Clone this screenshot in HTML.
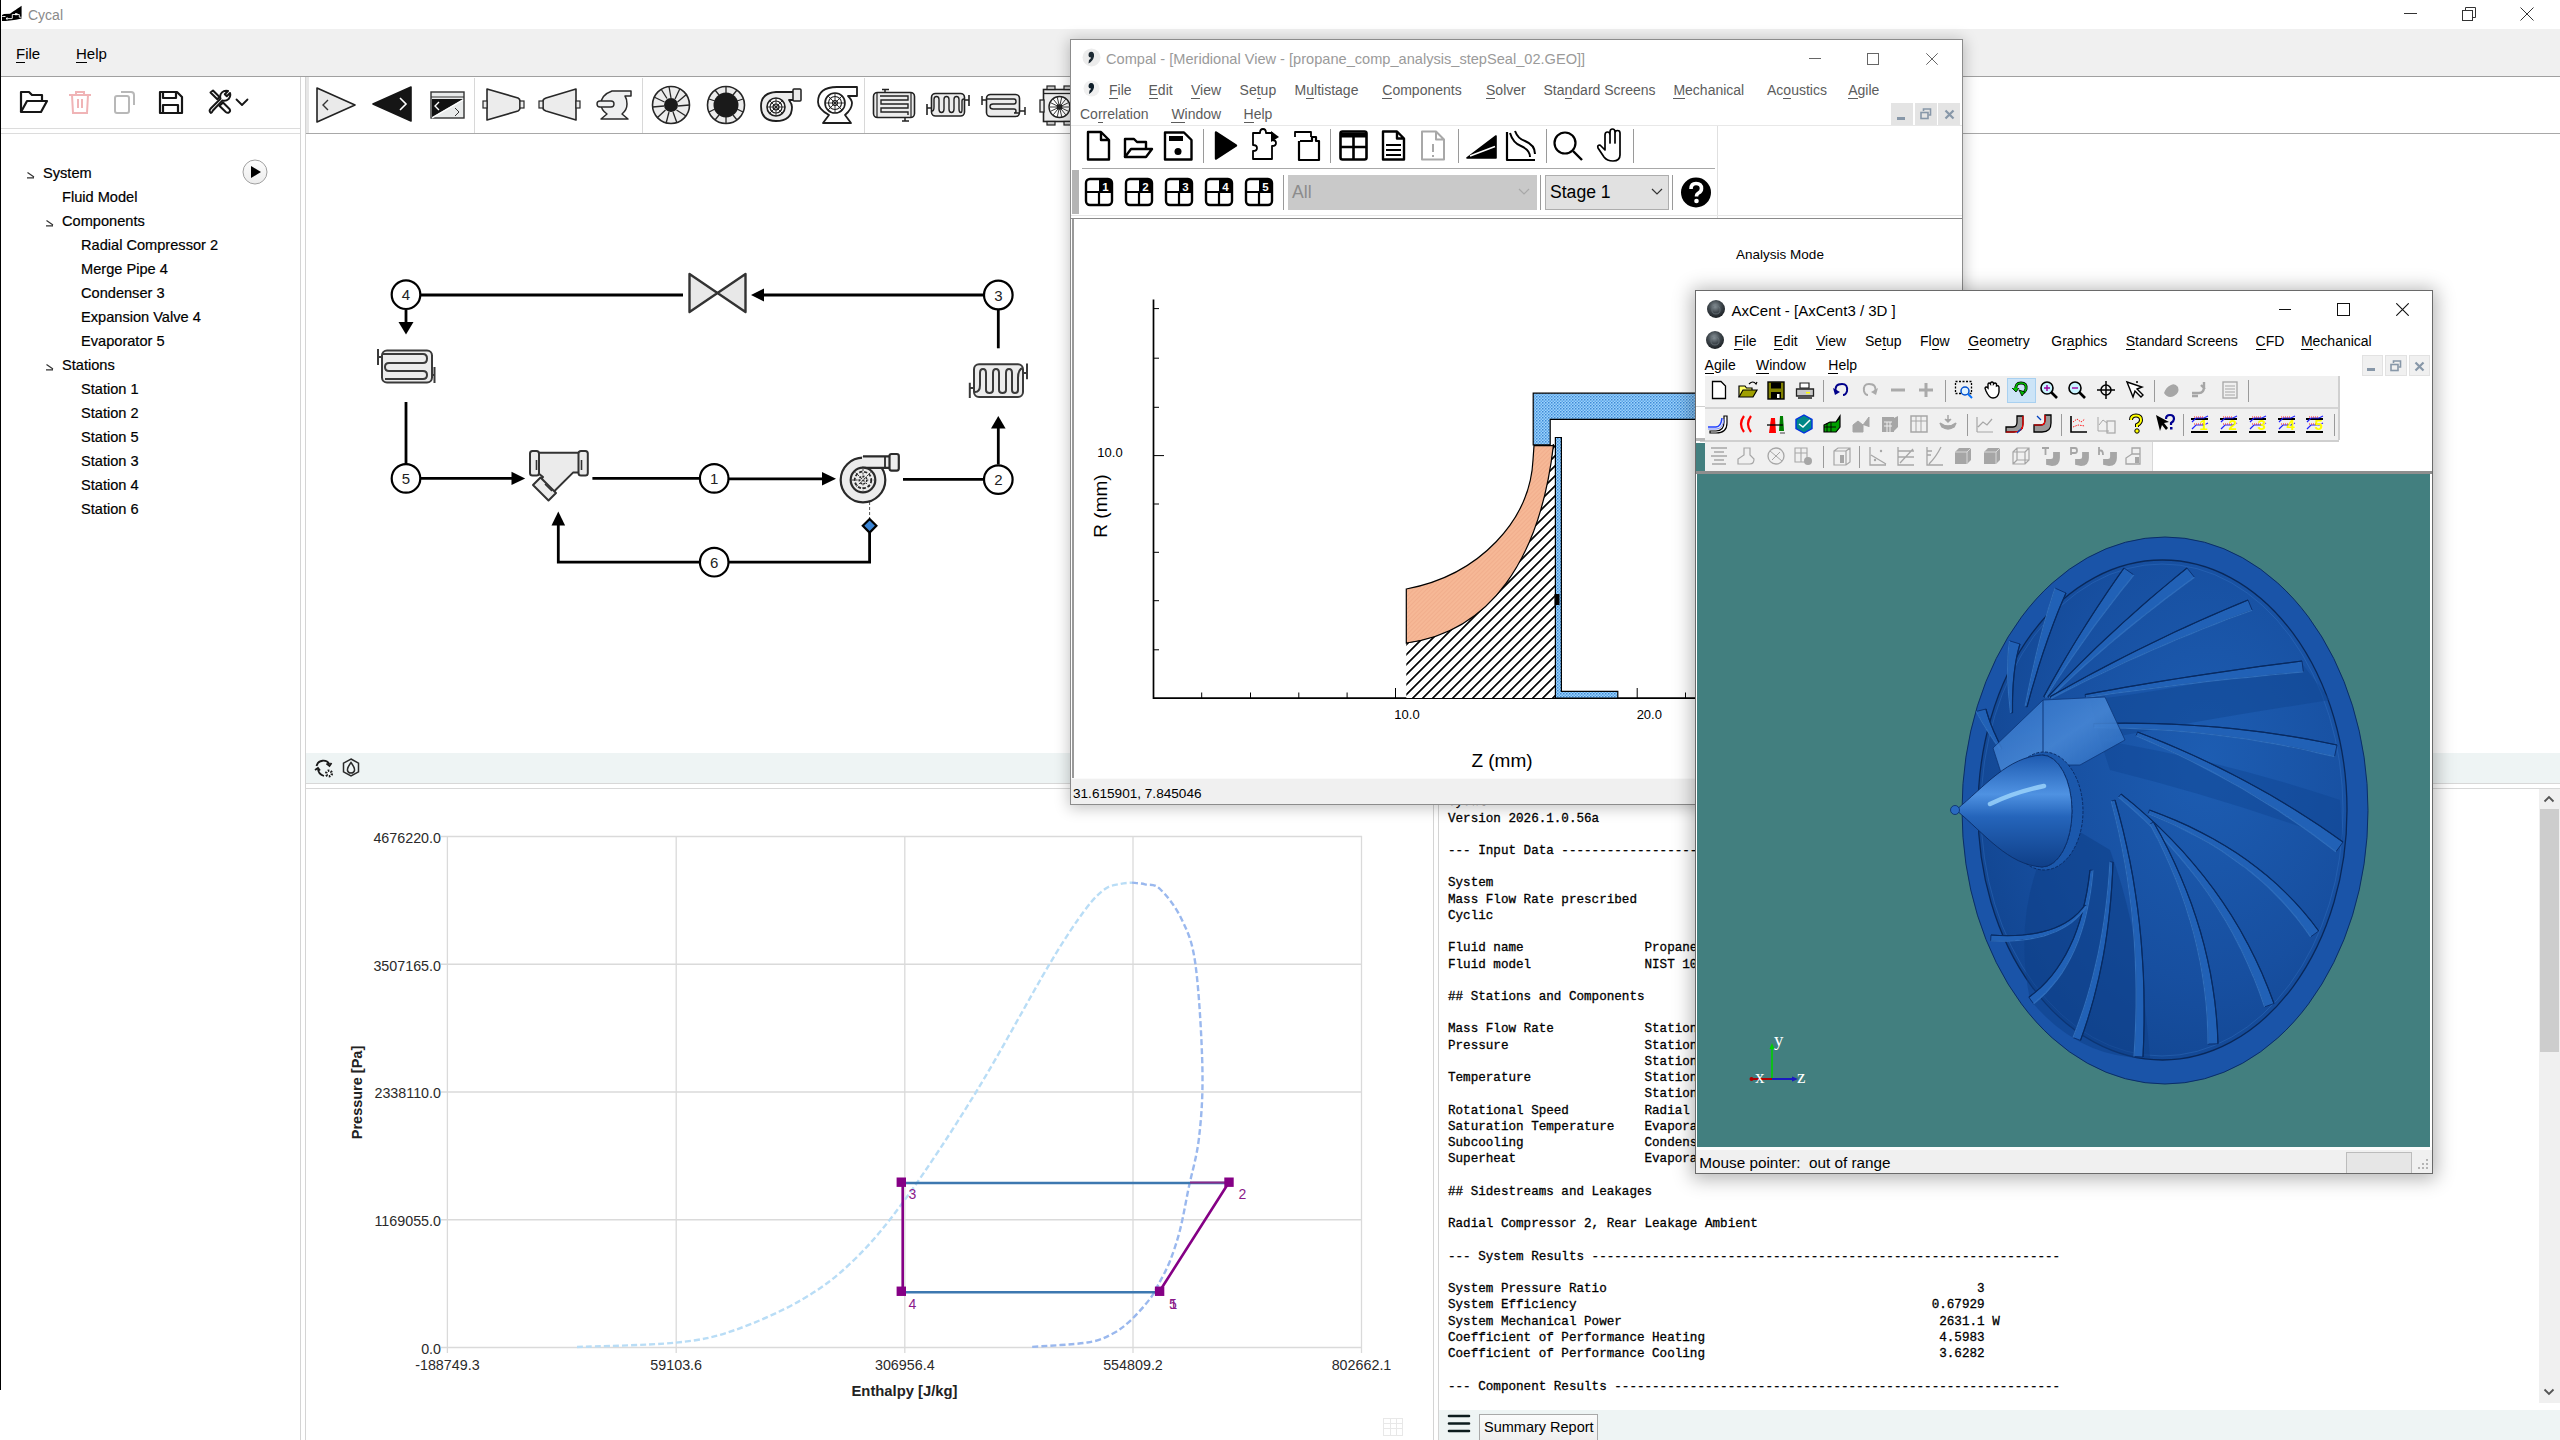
<!DOCTYPE html>
<html><head><meta charset="utf-8">
<style>
html,body{margin:0;padding:0;width:2560px;height:1440px;overflow:hidden;background:#fff;font-family:"Liberation Sans",sans-serif;}
.a{position:absolute;}
.t{position:absolute;white-space:pre;line-height:1;}
u{text-decoration:none;border-bottom:1px solid currentColor;}
</style></head><body>
<!-- ===== CYCAL MAIN WINDOW ===== -->
<div class="a" style="left:0;top:0;width:1px;height:1390px;background:#000"></div>
<!-- title bar -->
<div class="a" style="left:1px;top:0;width:2559px;height:29px;background:#fff"></div>
<!-- menu bar -->
<div class="a" style="left:1px;top:29px;width:2559px;height:47px;background:#f0f0f0"></div>
<div class="a" style="left:1px;top:76px;width:2559px;height:1px;background:#a0a0a0"></div>
<!-- toolbar -->
<div class="a" style="left:1px;top:128px;width:299px;height:1px;background:#dcdcdc"></div>
<div class="a" style="left:1px;top:133px;width:299px;height:1px;background:#dcdcdc"></div>
<div class="a" style="left:300px;top:77px;width:1px;height:1363px;background:#d4d4d4"></div>
<div class="a" style="left:305px;top:77px;width:1px;height:1363px;background:#d4d4d4"></div>
<div class="a" style="left:306px;top:77px;width:3px;height:56px;background:#e6e6e6"></div>
<div class="a" style="left:306px;top:133px;width:2254px;height:1px;background:#a8a8a8"></div>
<!-- chart toolbar strip -->
<div class="a" style="left:306px;top:753px;width:2254px;height:30px;background:#eef4f4"></div>
<div class="a" style="left:306px;top:783px;width:2254px;height:1px;background:#d8d8d8"></div>
<div class="a" style="left:306px;top:788px;width:2254px;height:1px;background:#d8d8d8"></div>
<div class="a" style="left:1433px;top:789px;width:1px;height:651px;background:#d4d4d4"></div>
<div class="a" style="left:1438px;top:789px;width:1px;height:651px;background:#d4d4d4"></div>
<div class="a" style="left:1439px;top:1410px;width:1121px;height:30px;background:#eef4f4"></div>


<!-- title -->
<svg class="a" style="left:0px;top:0px" width="24" height="24" viewBox="0 0 24 24"><path d="M2 15 L4 14 L10 13.8 L12 12.2 L13.8 11 L15.5 10 L17.5 8.5 L19.5 7.2 L21.6 5.8 V18.5 Q16 20 10 20.5 Q5 21 2 21 Z" fill="#000"/><path d="M2.2 16.5 H5.5 M6 18.6 H12 M6 18.6 L7.5 17.5 M6 18.6 L7.5 19.6 M12.3 18.6 V14.5 H19.3 V17.2 H21.6" fill="none" stroke="#fff" stroke-width="0.9"/><rect x="15" y="13.2" width="2.5" height="2" fill="#fff"/></svg>
<div class="t" style="left:28px;top:8px;font-size:14px;color:#8a8a8a">Cycal</div>
<!-- window controls -->
<div class="a" style="left:2404px;top:13px;width:13px;height:1px;background:#333"></div>
<svg class="a" style="left:2462px;top:7px" width="14" height="14" viewBox="0 0 14 14"><rect x="0.5" y="3.5" width="10" height="10" fill="none" stroke="#333"/><path d="M3.5 3.5 V0.5 H13.5 V10.5 H10.5" fill="none" stroke="#333"/></svg>
<svg class="a" style="left:2520px;top:7px" width="14" height="14" viewBox="0 0 14 14"><path d="M0.5 0.5 L13.5 13.5 M13.5 0.5 L0.5 13.5" stroke="#333" stroke-width="1"/></svg>
<!-- menu -->
<div class="t" style="left:16px;top:46px;font-size:15px;color:#000"><u>F</u>ile</div>
<div class="t" style="left:76px;top:46px;font-size:15px;color:#000"><u>H</u>elp</div>
<!-- left toolbar icons -->
<svg class="a" style="left:19px;top:90px" width="30" height="25" viewBox="0 0 30 25" fill="none" stroke="#161616" stroke-width="2.2" stroke-linejoin="round"><path d="M2 22 V2 H10 L13 5 H23 V11"/><path d="M2 22 L8 11 H28 L22 22 Z"/></svg>
<svg class="a" style="left:68px;top:90px" width="24" height="25" viewBox="0 0 24 25" fill="none" stroke="#f0b4b6" stroke-width="2"><path d="M1 5 H23 M8 5 V2 H16 V5"/><path d="M4 5 L5 23 H19 L20 5"/><path d="M10 9 V18 M14 9 V18"/></svg>
<svg class="a" style="left:114px;top:90px" width="22" height="25" viewBox="0 0 22 25" fill="none" stroke="#b8b8b8" stroke-width="2"><rect x="1" y="6" width="14" height="17" rx="2"/><path d="M7 2 H17 Q20 2 20 5 V15"/></svg>
<svg class="a" style="left:158px;top:90px" width="26" height="25" viewBox="0 0 26 25" fill="none" stroke="#161616" stroke-width="2.2" stroke-linejoin="round"><path d="M2 2 H19 L24 7 V23 H2 Z"/><path d="M5 2 V8 H18 V2"/><path d="M5 23 V15 H20 V23"/></svg>
<svg class="a" style="left:207px;top:89px" width="44" height="26" viewBox="0 0 44 26" fill="none" stroke="#161616" stroke-width="2" stroke-linejoin="round" stroke-linecap="round"><path d="M3.5 3.5 L6 1.5 L12.5 8 L10.3 10.2 Z"/><path d="M14 15.5 L16 13.5 L22.5 20 Q23.8 22 22.2 23.2 Q20.6 24.5 18.8 23 L12.3 16.8 Z"/><path d="M4 24 Q1.5 22 3.5 19.8 L13.5 9.8 Q12.3 6 15 3.4 Q17.6 1 21 2 L17.8 5.2 L19.8 7.2 L23 4 Q24 7.4 21.6 10 Q19 12.4 15.3 11.6 L5.7 21.8 Q4.7 24 4 24 Z"/><path d="M29.5 10.5 L35 16 L40.5 10.5" stroke-width="1.8"/></svg>
<!-- right toolbar icons -->
<div class="a" style="left:474px;top:78px;width:1px;height:55px;background:#d8d8d8"></div>
<div class="a" style="left:642px;top:78px;width:1px;height:55px;background:#d8d8d8"></div>
<div class="a" style="left:864px;top:78px;width:1px;height:55px;background:#d8d8d8"></div>
<svg class="a" style="left:316px;top:87px" width="40" height="36" viewBox="0 0 40 36"><path d="M1 1 L39 18 L1 35 Z" fill="#eaeaea" stroke="#222" stroke-width="1.6" stroke-linejoin="round"/><path d="M12 13 L7 18 L12 23" fill="none" stroke="#333" stroke-width="1.4"/></svg>
<svg class="a" style="left:372px;top:86px" width="40" height="36" viewBox="0 0 40 36"><path d="M39 1 L1 18 L39 35 Z" fill="#151515" stroke="#151515" stroke-width="1.6" stroke-linejoin="round"/><path d="M28 12 L34 18 L28 24" fill="none" stroke="#fff" stroke-width="1.6"/></svg>
<svg class="a" style="left:430px;top:91px" width="35" height="28" viewBox="0 0 35 28"><rect x="1" y="1" width="33" height="26" fill="#e8eaea" stroke="#333" stroke-width="1.4"/><path d="M1 6 H34" stroke="#333" stroke-width="1.2"/><path d="M2 26 L33 8 H2 Z" fill="#111"/><path d="M2 27 L33 9" stroke="#fff" stroke-width="1.2"/><path d="M9 11 L5 15 L9 19" fill="none" stroke="#fff" stroke-width="1.4"/><path d="M25 17 L29 21 L25 25" fill="none" stroke="#333" stroke-width="1"/></svg>
<svg class="a" style="left:482px;top:88px" width="44" height="33" viewBox="0 0 44 33"><path d="M5 1 L36 10 Q38 11 38 13 V20 Q38 22 36 23 L5 32 Z" fill="#ececec" stroke="#282828" stroke-width="1.6" stroke-linejoin="round"/><rect x="1" y="13" width="4" height="7" fill="#ececec" stroke="#282828" stroke-width="1.2"/><rect x="38" y="13" width="4" height="7" fill="#ececec" stroke="#282828" stroke-width="1.2"/></svg>
<svg class="a" style="left:538px;top:88px" width="44" height="33" viewBox="0 0 44 33"><path d="M38 1 L8 10 Q5 11 5 13 V20 Q5 22 8 23 L38 32 Z" fill="#ececec" stroke="#282828" stroke-width="1.6" stroke-linejoin="round"/><rect x="1" y="13" width="4" height="7" fill="#ececec" stroke="#282828" stroke-width="1.2"/><rect x="38" y="13" width="4" height="7" fill="#ececec" stroke="#282828" stroke-width="1.2"/></svg>
<svg class="a" style="left:596px;top:90px" width="38" height="31" viewBox="0 0 38 31"><path d="M16 1 H35 V6 H29 Q31 9 31 14 Q31 20 26 24 L32 29 H5 L11 24 Q5 20 5 14 Q5 5 16 1 Z" fill="#eeeff0" stroke="#2a2a2a" stroke-width="1.5" stroke-linejoin="round"/><rect x="1" y="11" width="17" height="6" rx="3" fill="#eeeff0" stroke="#2a2a2a" stroke-width="1.4"/></svg>
<svg class="a" style="left:651px;top:85px" width="40" height="40" viewBox="0 0 40 40"><circle cx="20" cy="20" r="18.5" fill="#ececec" stroke="#262626" stroke-width="1.6"/><circle cx="20" cy="20" r="7" fill="#1a1a1a"/><g stroke="#262626" stroke-width="1.3"><path d="M20 13 L18 1.5"/><path d="M24 14 L29 3.5"/><path d="M26.5 17 L36 9"/><path d="M27 21 L38.5 20"/><path d="M25.5 25 L35 31"/><path d="M22 27 L26 38"/><path d="M18 27 L15 38.5"/><path d="M14.5 25 L6 33"/><path d="M13 21 L1.5 22"/><path d="M13.5 17 L3 12"/><path d="M16 13.5 L10 4"/></g></svg>
<svg class="a" style="left:706px;top:85px" width="40" height="40" viewBox="0 0 40 40"><circle cx="20" cy="20" r="18.5" fill="#ececec" stroke="#262626" stroke-width="1.6"/><circle cx="20" cy="20" r="12.5" fill="#1a1a1a"/><g stroke="#262626" stroke-width="1.3"><path d="M20 8 L20 1.5"/><path d="M27 10 L31 5"/><path d="M31 16 L37 14"/><path d="M31 24 L37 27"/><path d="M27 30 L31 35"/><path d="M20 32 L20 38.5"/><path d="M13 30 L9 35"/><path d="M9 24 L3 27"/><path d="M9 16 L3 14"/><path d="M13 10 L9 5"/></g></svg>
<svg class="a" style="left:760px;top:88px" width="42" height="34" viewBox="0 0 42 34"><path d="M16 33 Q1 33 1 18 Q1 5 16 4 H34 V12 H29 Q32 16 32 19 Q32 33 16 33 Z" fill="#ececec" stroke="#1e1e1e" stroke-width="1.8" stroke-linejoin="round"/><rect x="33" y="1" width="8" height="12" rx="1" fill="#ececec" stroke="#1e1e1e" stroke-width="1.5"/><circle cx="16" cy="19" r="9" fill="#fff" stroke="#1e1e1e" stroke-width="1.6"/><circle cx="16" cy="19" r="6" fill="none" stroke="#1e1e1e" stroke-width="1.2"/><circle cx="16" cy="19" r="3" fill="none" stroke="#1e1e1e" stroke-width="1.2"/><path d="M7 19 H25 M16 10 V28 M10 13 L22 25 M22 13 L10 25" stroke="#1e1e1e" stroke-width="0.9"/></svg>
<svg class="a" style="left:815px;top:85px" width="44" height="40" viewBox="0 0 44 40"><path d="M8 38 L14 30 Q3 24 3 17 Q3 2 22 2 H42 V11 H33 Q37 15 37 18 Q37 24 30 30 L36 38 Z" fill="#fff" stroke="#1e1e1e" stroke-width="1.8" stroke-linejoin="round"/><circle cx="20" cy="18" r="10" fill="#fff" stroke="#1e1e1e" stroke-width="1.6"/><circle cx="20" cy="18" r="6.5" fill="none" stroke="#1e1e1e" stroke-width="1.1"/><circle cx="20" cy="18" r="2.5" fill="none" stroke="#1e1e1e" stroke-width="1.1"/><path d="M10 18 H30 M20 8 V28 M13 11 L27 25 M27 11 L13 25" stroke="#1e1e1e" stroke-width="0.9"/></svg>
<svg class="a" style="left:872px;top:88px" width="44" height="35" viewBox="0 0 44 35"><rect x="1.5" y="4.5" width="41" height="25" rx="4" fill="#ececec" stroke="#222" stroke-width="1.6"/><path d="M5 5 V29 M39 5 V29" stroke="#222" stroke-width="1.2"/><path d="M10 1.5 H17 M13 1.5 V5 M30 33 H37 M33 30 V33" stroke="#222" stroke-width="1.5"/><path d="M8 8 H36 V12 H9 V16 H36 V20 H9 V24 H36 V27" fill="none" stroke="#222" stroke-width="1.4"/></svg>
<svg class="a" style="left:926px;top:92px" width="44" height="27" viewBox="0 0 44 27"><rect x="5.5" y="1.5" width="33" height="22.5" rx="4" fill="#ececec" stroke="#222" stroke-width="1.6"/><path d="M1 16 H6 M1 12 V23 M38 8 H43 M43 3 V14" stroke="#222" stroke-width="1.6"/><path d="M6 19 Q8 19 8 15 V7.5 Q8 4.5 10.5 4.5 Q13 4.5 13 7.5 V17 Q13 20.5 15.5 20.5 Q18 20.5 18 17 V7.5 Q18 4.5 20.5 4.5 Q23 4.5 23 7.5 V17 Q23 20.5 25.5 20.5 Q28 20.5 28 17 V7.5 Q28 4.5 30.5 4.5 Q33 4.5 33 7.5 V17 Q33 20.5 35 20.5 Q36 20.5 36 17 V9 Q36 7 38 7" fill="none" stroke="#222" stroke-width="1.4"/></svg>
<svg class="a" style="left:981px;top:92px" width="45" height="27" viewBox="0 0 45 27"><rect x="5.5" y="2.5" width="33" height="22" rx="4" fill="#ececec" stroke="#222" stroke-width="1.6"/><path d="M1 8 H6 M1 4 V13 M38 19 H44 M44 15 V23" stroke="#222" stroke-width="1.5"/><path d="M5 7 H33 Q35 7 35 9.5 Q35 12 33 12 H12 Q9 12 9 14.5 Q9 17 12 17 H33 Q35 17 35 19 Q35 21 33 21 H38" fill="none" stroke="#222" stroke-width="1.4"/></svg>
<svg class="a" style="left:1038px;top:84px" width="33" height="42" viewBox="0 0 33 42"><rect x="5.5" y="5.5" width="30" height="32" fill="#ececec" stroke="#222" stroke-width="1.6"/><path d="M5.5 9.5 H33" stroke="#222" stroke-width="1.3"/><rect x="2" y="16" width="4" height="12" fill="#ececec" stroke="#222" stroke-width="1.3"/><rect x="9" y="2" width="8" height="3.5" fill="#c8c8c8" stroke="#222" stroke-width="1.2"/><rect x="26" y="2" width="8" height="3.5" fill="#c8c8c8" stroke="#222" stroke-width="1.2"/><rect x="9" y="37.5" width="8" height="3.5" fill="#c8c8c8" stroke="#222" stroke-width="1.2"/><rect x="26" y="37.5" width="8" height="3.5" fill="#c8c8c8" stroke="#222" stroke-width="1.2"/><circle cx="21.5" cy="23" r="10.5" fill="#fff" stroke="#222" stroke-width="1.4"/><circle cx="21.5" cy="23" r="2.8" fill="#111"/><g stroke="#222" stroke-width="0.9"><path d="M21.5 23 L31.50 23.00"/><path d="M21.5 23 L30.51 27.34"/><path d="M21.5 23 L27.73 30.82"/><path d="M21.5 23 L23.73 32.75"/><path d="M21.5 23 L19.27 32.75"/><path d="M21.5 23 L15.27 30.82"/><path d="M21.5 23 L12.49 27.34"/><path d="M21.5 23 L11.50 23.00"/><path d="M21.5 23 L12.49 18.66"/><path d="M21.5 23 L15.27 15.18"/><path d="M21.5 23 L19.27 13.25"/><path d="M21.5 23 L23.73 13.25"/><path d="M21.5 23 L27.73 15.18"/><path d="M21.5 23 L30.51 18.66"/></g></svg>

<!-- tree -->
<div class="t" style="left:43px;top:166.2px;font-size:14.6px;color:#000;-webkit-text-stroke:0.2px #000">System</div>
<svg class="a" style="left:26px;top:172.2px" width="10" height="7" viewBox="0 0 10 7"><path d="M1.5 0.5 L8 5 M1 5.8 H8" stroke="#333" stroke-width="1.2" fill="none"/></svg>
<div class="t" style="left:62px;top:190.2px;font-size:14.6px;color:#000;-webkit-text-stroke:0.2px #000">Fluid Model</div>
<div class="t" style="left:62px;top:214.2px;font-size:14.6px;color:#000;-webkit-text-stroke:0.2px #000">Components</div>
<svg class="a" style="left:45px;top:220.2px" width="10" height="7" viewBox="0 0 10 7"><path d="M1.5 0.5 L8 5 M1 5.8 H8" stroke="#333" stroke-width="1.2" fill="none"/></svg>
<div class="t" style="left:81px;top:238.2px;font-size:14.6px;color:#000;-webkit-text-stroke:0.2px #000">Radial Compressor 2</div>
<div class="t" style="left:81px;top:262.2px;font-size:14.6px;color:#000;-webkit-text-stroke:0.2px #000">Merge Pipe 4</div>
<div class="t" style="left:81px;top:286.2px;font-size:14.6px;color:#000;-webkit-text-stroke:0.2px #000">Condenser 3</div>
<div class="t" style="left:81px;top:310.2px;font-size:14.6px;color:#000;-webkit-text-stroke:0.2px #000">Expansion Valve 4</div>
<div class="t" style="left:81px;top:334.2px;font-size:14.6px;color:#000;-webkit-text-stroke:0.2px #000">Evaporator 5</div>
<div class="t" style="left:62px;top:358.2px;font-size:14.6px;color:#000;-webkit-text-stroke:0.2px #000">Stations</div>
<svg class="a" style="left:45px;top:364.2px" width="10" height="7" viewBox="0 0 10 7"><path d="M1.5 0.5 L8 5 M1 5.8 H8" stroke="#333" stroke-width="1.2" fill="none"/></svg>
<div class="t" style="left:81px;top:382.2px;font-size:14.6px;color:#000;-webkit-text-stroke:0.2px #000">Station 1</div>
<div class="t" style="left:81px;top:406.2px;font-size:14.6px;color:#000;-webkit-text-stroke:0.2px #000">Station 2</div>
<div class="t" style="left:81px;top:430.2px;font-size:14.6px;color:#000;-webkit-text-stroke:0.2px #000">Station 5</div>
<div class="t" style="left:81px;top:454.2px;font-size:14.6px;color:#000;-webkit-text-stroke:0.2px #000">Station 3</div>
<div class="t" style="left:81px;top:478.2px;font-size:14.6px;color:#000;-webkit-text-stroke:0.2px #000">Station 4</div>
<div class="t" style="left:81px;top:502.2px;font-size:14.6px;color:#000;-webkit-text-stroke:0.2px #000">Station 6</div>
<svg class="a" style="left:241px;top:158px" width="28" height="28" viewBox="0 0 28 28"><defs><linearGradient id="rg" x1="0" y1="0" x2="0" y2="1"><stop offset="0" stop-color="#fdfdfd"/><stop offset="1" stop-color="#ececec"/></linearGradient></defs><circle cx="14" cy="14" r="12" fill="url(#rg)" stroke="#a0a0a0" stroke-width="1"/><path d="M10 8 L20 14 L10 20 Z" fill="#000"/></svg>
<!-- diagram -->
<svg class="a" style="left:0;top:0" width="1070" height="760" viewBox="0 0 1070 760">
<g stroke="#000" stroke-width="2.8" fill="none"><path d="M421 295 H683"/><path d="M983 295 H763"/><path d="M406 310 V323"/><path d="M406 402 V464"/><path d="M421 478.4 H512"/><path d="M592.4 478.4 H699"/><path d="M729 478.8 H822"/><path d="M903 479.4 H983"/><path d="M998.3 464.5 V428"/><path d="M998.3 348.3 V310"/><path d="M869.6 533 V562.2 H729"/><path d="M699 562.2 H558.3 V525"/></g><path d="M869.6 502 V518" stroke="#555" stroke-width="1" stroke-dasharray="3,2"/><g fill="#000"><path d="M751 295 L764 288.5 L764 301.5 Z"/><path d="M406 334.5 L398.5 322 L413.5 322 Z"/><path d="M525.2 478.4 L511.5 471.8 L511.5 485 Z"/><path d="M836 478.8 L822 472 L822 485.5 Z"/><path d="M998.3 416 L991 428.4 L1005.6 428.4 Z"/><path d="M558.3 511.5 L551.5 525.5 L565.1 525.5 Z"/></g><circle cx="406" cy="294.7" r="14.3" fill="#fff" stroke="#000" stroke-width="2.2"/><text x="406" y="300.2" text-anchor="middle" font-size="15" fill="#222" font-family="Liberation Sans">4</text><circle cx="998.3" cy="295" r="14.3" fill="#fff" stroke="#000" stroke-width="2.2"/><text x="998.3" y="300.5" text-anchor="middle" font-size="15" fill="#222" font-family="Liberation Sans">3</text><circle cx="406" cy="478.4" r="14.3" fill="#fff" stroke="#000" stroke-width="2.2"/><text x="406" y="483.9" text-anchor="middle" font-size="15" fill="#222" font-family="Liberation Sans">5</text><circle cx="714.2" cy="478.4" r="14.3" fill="#fff" stroke="#000" stroke-width="2.2"/><text x="714.2" y="483.9" text-anchor="middle" font-size="15" fill="#222" font-family="Liberation Sans">1</text><circle cx="998.3" cy="479.6" r="14.3" fill="#fff" stroke="#000" stroke-width="2.2"/><text x="998.3" y="485.1" text-anchor="middle" font-size="15" fill="#222" font-family="Liberation Sans">2</text><circle cx="714.2" cy="562.2" r="14.3" fill="#fff" stroke="#000" stroke-width="2.2"/><text x="714.2" y="567.7" text-anchor="middle" font-size="15" fill="#222" font-family="Liberation Sans">6</text><path d="M689.5 274 L717.5 293 L689.5 312 Z M745.5 274 L717.5 293 L745.5 312 Z" fill="#e8e8e8" stroke="#333" stroke-width="2.4" stroke-linejoin="round"/><g stroke="#3a3a3a" stroke-width="2" fill="none"><rect x="382" y="350.5" width="50" height="32" rx="5" fill="#ececec"/><path d="M378 349 V365 M378 357 H383 M434.5 367 V383 M432 375 H435"/><path d="M383 354 H423 Q427 354 427 358.5 Q427 363 423 363 H389 Q385 363 385 367 Q385 371 389 371 H423 Q427 371 427 375 Q427 379 423 379 H385"/></g><g stroke="#333" stroke-width="2" fill="#ebebeb" stroke-linejoin="round"><path d="M538 452.8 H579 V472.6 H573 L553 492.5 L540 480 L543 477 L538 473 Z"/><path d="M533 485 L540.5 477.5 L556 493 L548.5 500.5 Z"/><rect x="530" y="451" width="9" height="24.4" rx="2.5"/><rect x="578.5" y="451" width="9.3" height="24.4" rx="2.5"/><path d="M536.5 460 V470 M581.5 460 V470 M545 484 L552 491" stroke-width="1.6" fill="none"/></g><g stroke="#2a2a2a" stroke-width="2.2" stroke-linejoin="round"><circle cx="863" cy="480" r="22.3" fill="#ececec"/><rect x="862" y="456.3" width="27" height="11.5" fill="#ececec" stroke="none"/><path d="M863 456.3 H889 M862 467.8 H889" fill="none"/><rect x="889.5" y="454" width="9.3" height="16.6" rx="2" fill="#ececec"/><path d="M885 456.3 V467.8" stroke-width="1.8"/><circle cx="863" cy="480" r="12.3" fill="#ececec"/><circle cx="863" cy="480" r="8.3" fill="none" stroke-width="1.8" stroke-dasharray="3.2,1.8"/><circle cx="863" cy="480" r="3.8" fill="none" stroke-width="1.5" stroke-dasharray="2,1.4"/><path d="M852 480 H874 M863 469 V491 M855.5 472.5 L870.5 487.5 M870.5 472.5 L855.5 487.5" stroke-width="0.9" stroke-dasharray="2,1.6"/></g><path d="M869.6 519 L876.4 525.8 L869.6 532.6 L862.8 525.8 Z" fill="#3a84d4" stroke="#000" stroke-width="2.2"/><g stroke="#3a3a3a" stroke-width="2" fill="none"><rect x="974" y="364.3" width="49" height="32.7" rx="5" fill="#ececec"/><path d="M969.8 382.7 V398 M969.8 388 H975 M1027 363.6 V379.2 M1023 373 H1027"/><path d="M975 392 Q980 392 980 385 V373 Q980 369 983 369 Q986 369 986 373 V390 Q986 393 989.5 393 Q993 393 993 390 V373 Q993 369 996 369 Q999 369 999 373 V390 Q999 393 1002.5 393 Q1006 393 1006 390 V373 Q1006 369 1009 369 Q1012 369 1012 373 V390 Q1012 393 1015 393 Q1018 393 1018 390 V378 Q1018 369 1023 368"/></g></svg>
<!-- chart -->
<svg class="a" style="left:306px;top:789px" width="1127" height="651" viewBox="306 789 1127 651">
<g stroke="#dadada" stroke-width="1.3"><path d="M447.4 836 V1353"/><path d="M676.2 836 V1353"/><path d="M904.8 836 V1353"/><path d="M1133 836 V1353"/><path d="M1361.5 836 V1353"/><path d="M441 836.5 H1362"/><path d="M441 964.25 H1362"/><path d="M441 1092 H1362"/><path d="M441 1219.75 H1362"/><path d="M441 1347.5 H1362"/></g><g font-family="Liberation Sans" font-size="14.3" fill="#2a2a2a"><text x="441" y="842.8" text-anchor="end">4676220.0</text><text x="441" y="970.55" text-anchor="end">3507165.0</text><text x="441" y="1098.3" text-anchor="end">2338110.0</text><text x="441" y="1226.05" text-anchor="end">1169055.0</text><text x="441" y="1353.8" text-anchor="end">0.0</text><text x="447.4" y="1369.7" text-anchor="middle">-188749.3</text><text x="676.2" y="1369.7" text-anchor="middle">59103.6</text><text x="904.8" y="1369.7" text-anchor="middle">306956.4</text><text x="1133" y="1369.7" text-anchor="middle">554809.2</text><text x="1361.5" y="1369.7" text-anchor="middle">802662.1</text></g><text x="904.5" y="1395.5" text-anchor="middle" font-family="Liberation Sans" font-weight="bold" font-size="14.8" fill="#222">Enthalpy [J/kg]</text><text transform="translate(361.5,1092.5) rotate(-90)" text-anchor="middle" font-family="Liberation Sans" font-weight="bold" font-size="14.5" fill="#222">Pressure [Pa]</text><path d="M577 1347 C593.5 1346.3 649.9 1345.3 676 1342.6 C702.1 1339.8 712.4 1337.8 733.6 1330.5 C754.8 1323.2 782.8 1310.9 803 1299 C823.2 1287.1 837.7 1276.0 855 1259 C872.3 1242.0 886.7 1224.8 907 1196.8 C927.3 1168.8 952.9 1129.8 976.7 1091 C1000.5 1052.2 1031.5 994.2 1049.6 964 C1067.6 933.8 1075.8 922.5 1085 910 C1094.2 897.5 1099.2 893.3 1105 889 C1110.8 884.7 1115.5 885.1 1120 884 C1124.5 882.9 1130.0 882.8 1132 882.6" fill="none" stroke="#b9ddf6" stroke-width="2.4" stroke-dasharray="6,3"/><path d="M1132 882.6 C1134.2 882.9 1140.3 883.2 1145 884.3 C1149.7 885.4 1153.9 883.2 1160 889 C1166.1 894.8 1175.6 906.5 1181.5 919 C1187.4 931.5 1191.9 939.2 1195.4 964 C1198.9 988.8 1201.8 1039.0 1202.4 1068 C1203.0 1097.0 1201.3 1117.9 1199 1137.8 C1196.7 1157.7 1191.9 1172.1 1188.75 1187.5 C1185.6 1202.9 1183.1 1217.8 1180 1230 C1176.9 1242.2 1173.5 1252.0 1170 1261 C1166.5 1270.0 1162.1 1277.5 1158.75 1283.75 C1155.4 1290.0 1154.6 1292.7 1150 1298.75 C1145.4 1304.8 1137.2 1314.2 1131 1320 C1124.8 1325.8 1119.8 1330.0 1112.5 1333.75 C1105.2 1337.5 1101.2 1340.3 1087.5 1342.5 C1073.8 1344.7 1039.6 1346.2 1030 1347" fill="none" stroke="#9ab8ee" stroke-width="2.4" stroke-dasharray="6,3"/><path d="M902 1183 H1229 M902 1292.3 H1160" stroke="#3d78b0" stroke-width="2.4"/><path d="M1190 1182.6 H1229" stroke="#8a2a8a" stroke-width="2"/><path d="M902.7 1182 V1291.5 M1159.6 1291.25 L1229 1182.2" stroke="#850085" stroke-width="2.6" fill="none"/><g fill="#850085"><rect x="896.5999999999999" y="1177.5" width="9.4" height="9.4"/><rect x="1224.3" y="1177.5" width="9.4" height="9.4"/><rect x="896.5999999999999" y="1286.55" width="9.4" height="9.4"/><rect x="1154.8999999999999" y="1286.55" width="9.4" height="9.4"/></g><g font-family="Liberation Sans" font-size="14" fill="#8a1a8a"><text x="908.5" y="1198.5">3</text><text x="1238.5" y="1198.5">2</text><text x="908.5" y="1308.6">4</text><text x="1169" y="1308.6">5</text><text x="1169.5" y="1308.6">1</text></g><g stroke="#e8e8e8" stroke-width="1" fill="none"><rect x="1383.5" y="1418.5" width="19" height="17"/><path d="M1383.5 1423.5 H1402.5 M1383.5 1428.5 H1402.5 M1390.5 1418.5 V1435.5 M1396.5 1418.5 V1435.5"/></g></svg>
<svg class="a" style="left:313px;top:757px" width="22" height="22" viewBox="0 0 22 22" fill="none" stroke="#1a1a1a" stroke-width="1.8"><path d="M3.5 9 A7 7 0 0 1 16.5 7.5"/><path d="M13.5 6.5 L16.5 9 L18.5 6"/><path d="M2 13 L5 11 L7 13.5"/><path d="M5 11.5 Q5 17 11 19"/><circle cx="16" cy="16.5" r="2.8" stroke-width="2.5" stroke-dasharray="1.6,1.3"/><circle cx="16" cy="16.5" r="1.2" fill="#fff" stroke="none"/></svg><svg class="a" style="left:341px;top:757px" width="20" height="22" viewBox="0 0 20 22" fill="none" stroke="#2a2a2a" stroke-width="1.5"><path d="M10 2 L17.5 6.2 V14.8 L10 19 L2.5 14.8 V6.2 Z"/><path d="M10 5.5 Q6 11 6.5 13.5 Q7 16 10 16 Q13 16 13.5 13.5 Q14 11 10 5.5 Z"/></svg>
<!-- report -->
<div class="a" style="left:1439px;top:789px;width:1100px;height:614px;overflow:hidden"><div class="t" style="left:9px;top:7.27px;font-family:'Liberation Mono',monospace;font-size:12.6px;color:#000;-webkit-text-stroke:0.3px #000">Cycal</div><div class="t" style="left:9px;top:23.50px;font-family:'Liberation Mono',monospace;font-size:12.6px;color:#000;-webkit-text-stroke:0.3px #000">Version 2026.1.0.56a</div><div class="t" style="left:9px;top:39.73px;font-family:'Liberation Mono',monospace;font-size:12.6px;color:#000;-webkit-text-stroke:0.3px #000"></div><div class="t" style="left:9px;top:55.96px;font-family:'Liberation Mono',monospace;font-size:12.6px;color:#000;-webkit-text-stroke:0.3px #000">--- Input Data ------------------------------------------------------------------</div><div class="t" style="left:9px;top:72.19px;font-family:'Liberation Mono',monospace;font-size:12.6px;color:#000;-webkit-text-stroke:0.3px #000"></div><div class="t" style="left:9px;top:88.42px;font-family:'Liberation Mono',monospace;font-size:12.6px;color:#000;-webkit-text-stroke:0.3px #000">System</div><div class="t" style="left:9px;top:104.65px;font-family:'Liberation Mono',monospace;font-size:12.6px;color:#000;-webkit-text-stroke:0.3px #000">Mass Flow Rate prescribed</div><div class="t" style="left:9px;top:120.88px;font-family:'Liberation Mono',monospace;font-size:12.6px;color:#000;-webkit-text-stroke:0.3px #000">Cyclic</div><div class="t" style="left:9px;top:137.11px;font-family:'Liberation Mono',monospace;font-size:12.6px;color:#000;-webkit-text-stroke:0.3px #000"></div><div class="t" style="left:9px;top:153.34px;font-family:'Liberation Mono',monospace;font-size:12.6px;color:#000;-webkit-text-stroke:0.3px #000">Fluid name                Propane</div><div class="t" style="left:9px;top:169.57px;font-family:'Liberation Mono',monospace;font-size:12.6px;color:#000;-webkit-text-stroke:0.3px #000">Fluid model               NIST 10.0</div><div class="t" style="left:9px;top:185.80px;font-family:'Liberation Mono',monospace;font-size:12.6px;color:#000;-webkit-text-stroke:0.3px #000"></div><div class="t" style="left:9px;top:202.03px;font-family:'Liberation Mono',monospace;font-size:12.6px;color:#000;-webkit-text-stroke:0.3px #000">## Stations and Components</div><div class="t" style="left:9px;top:218.26px;font-family:'Liberation Mono',monospace;font-size:12.6px;color:#000;-webkit-text-stroke:0.3px #000"></div><div class="t" style="left:9px;top:234.49px;font-family:'Liberation Mono',monospace;font-size:12.6px;color:#000;-webkit-text-stroke:0.3px #000">Mass Flow Rate            Station 1</div><div class="t" style="left:9px;top:250.72px;font-family:'Liberation Mono',monospace;font-size:12.6px;color:#000;-webkit-text-stroke:0.3px #000">Pressure                  Station 1</div><div class="t" style="left:9px;top:266.95px;font-family:'Liberation Mono',monospace;font-size:12.6px;color:#000;-webkit-text-stroke:0.3px #000">                          Station 2</div><div class="t" style="left:9px;top:283.18px;font-family:'Liberation Mono',monospace;font-size:12.6px;color:#000;-webkit-text-stroke:0.3px #000">Temperature               Station 1</div><div class="t" style="left:9px;top:299.41px;font-family:'Liberation Mono',monospace;font-size:12.6px;color:#000;-webkit-text-stroke:0.3px #000">                          Station 3</div><div class="t" style="left:9px;top:315.64px;font-family:'Liberation Mono',monospace;font-size:12.6px;color:#000;-webkit-text-stroke:0.3px #000">Rotational Speed          Radial Compressor 2</div><div class="t" style="left:9px;top:331.87px;font-family:'Liberation Mono',monospace;font-size:12.6px;color:#000;-webkit-text-stroke:0.3px #000">Saturation Temperature    Evaporator 5</div><div class="t" style="left:9px;top:348.10px;font-family:'Liberation Mono',monospace;font-size:12.6px;color:#000;-webkit-text-stroke:0.3px #000">Subcooling                Condenser 3</div><div class="t" style="left:9px;top:364.33px;font-family:'Liberation Mono',monospace;font-size:12.6px;color:#000;-webkit-text-stroke:0.3px #000">Superheat                 Evaporator 5</div><div class="t" style="left:9px;top:380.56px;font-family:'Liberation Mono',monospace;font-size:12.6px;color:#000;-webkit-text-stroke:0.3px #000"></div><div class="t" style="left:9px;top:396.79px;font-family:'Liberation Mono',monospace;font-size:12.6px;color:#000;-webkit-text-stroke:0.3px #000">## Sidestreams and Leakages</div><div class="t" style="left:9px;top:413.02px;font-family:'Liberation Mono',monospace;font-size:12.6px;color:#000;-webkit-text-stroke:0.3px #000"></div><div class="t" style="left:9px;top:429.25px;font-family:'Liberation Mono',monospace;font-size:12.6px;color:#000;-webkit-text-stroke:0.3px #000">Radial Compressor 2, Rear Leakage Ambient</div><div class="t" style="left:9px;top:445.48px;font-family:'Liberation Mono',monospace;font-size:12.6px;color:#000;-webkit-text-stroke:0.3px #000"></div><div class="t" style="left:9px;top:461.71px;font-family:'Liberation Mono',monospace;font-size:12.6px;color:#000;-webkit-text-stroke:0.3px #000">--- System Results --------------------------------------------------------------</div><div class="t" style="left:9px;top:477.94px;font-family:'Liberation Mono',monospace;font-size:12.6px;color:#000;-webkit-text-stroke:0.3px #000"></div><div class="t" style="left:9px;top:494.17px;font-family:'Liberation Mono',monospace;font-size:12.6px;color:#000;-webkit-text-stroke:0.3px #000">System Pressure Ratio                                                 3</div><div class="t" style="left:9px;top:510.40px;font-family:'Liberation Mono',monospace;font-size:12.6px;color:#000;-webkit-text-stroke:0.3px #000">System Efficiency                                               0.67929</div><div class="t" style="left:9px;top:526.63px;font-family:'Liberation Mono',monospace;font-size:12.6px;color:#000;-webkit-text-stroke:0.3px #000">System Mechanical Power                                          2631.1 W</div><div class="t" style="left:9px;top:542.86px;font-family:'Liberation Mono',monospace;font-size:12.6px;color:#000;-webkit-text-stroke:0.3px #000">Coefficient of Performance Heating                               4.5983</div><div class="t" style="left:9px;top:559.09px;font-family:'Liberation Mono',monospace;font-size:12.6px;color:#000;-webkit-text-stroke:0.3px #000">Coefficient of Performance Cooling                               3.6282</div><div class="t" style="left:9px;top:575.32px;font-family:'Liberation Mono',monospace;font-size:12.6px;color:#000;-webkit-text-stroke:0.3px #000"></div><div class="t" style="left:9px;top:591.55px;font-family:'Liberation Mono',monospace;font-size:12.6px;color:#000;-webkit-text-stroke:0.3px #000">--- Component Results -----------------------------------------------------------</div></div>
<div class="a" style="left:2539px;top:789px;width:21px;height:614px;background:#f0f0f0"></div><div class="a" style="left:2540px;top:809px;width:19px;height:243px;background:#cdcdcd"></div><svg class="a" style="left:2543px;top:794px" width="12" height="10" viewBox="0 0 12 10"><path d="M1.5 7.5 L6 3 L10.5 7.5" fill="none" stroke="#555" stroke-width="1.8"/></svg><svg class="a" style="left:2543px;top:1387px" width="12" height="10" viewBox="0 0 12 10"><path d="M1.5 2.5 L6 7 L10.5 2.5" fill="none" stroke="#555" stroke-width="1.8"/></svg><svg class="a" style="left:1447px;top:1413px" width="24" height="22" viewBox="0 0 24 22"><path d="M2 3 H22 M2 10.5 H22 M2 18 H22" stroke="#0d1c1e" stroke-width="2.6" stroke-linecap="round"/></svg><div class="a" style="left:1479px;top:1414px;width:119px;height:26px;background:linear-gradient(#fbfbfb,#efefef);border:1px solid #a9a9a9;border-bottom:none;box-sizing:border-box"></div><div class="t" style="left:1484px;top:1419.5px;font-size:14.5px;color:#000">Summary Report</div>
<div id="cycal-content"></div>
<!-- ===== COMPAL WINDOW ===== -->
<div class="a" style="left:1070px;top:39px;width:893px;height:766px;background:#fff;box-shadow:0 2px 14px 1px rgba(0,0,0,0.24);border:1px solid #8c8c8c;box-sizing:border-box"></div>
<svg class="a" style="left:1082px;top:48px" width="19" height="19" viewBox="0 0 19 19"><circle cx="9.5" cy="9.5" r="9" fill="#ececec"/><path d="M8 4 Q12.5 3 12 8.5 Q11 13 6.5 15.5 L7 12 Q9 10.5 9 9.5 Q6.5 9.5 6.5 7 Q6.5 4.5 8 4 Z" fill="#1d2a33"/></svg><div class="t" style="left:1106px;top:52px;font-size:14.6px;color:#9a9a9a">Compal - [Meridional View - [propane_comp_analysis_stepSeal_02.GEO]]</div><div class="a" style="left:1809px;top:58px;width:12px;height:1px;background:#666"></div><div class="a" style="left:1867px;top:53px;width:12px;height:12px;border:1px solid #666;box-sizing:border-box"></div><svg class="a" style="left:1926px;top:53px" width="12" height="12" viewBox="0 0 12 12"><path d="M0.3 0.3 L11.7 11.7 M11.7 0.3 L0.3 11.7" stroke="#666" stroke-width="1"/></svg>
<svg class="a" style="left:1083px;top:80px" width="17" height="17" viewBox="0 0 17 17"><circle cx="8.5" cy="8.5" r="8" fill="#f0f0f0"/><path d="M7.5 3 Q11.5 2.5 11 7.5 Q10 11.5 6 14 L6.5 10.5 Q8 9.5 8 8.5 Q5.5 8.5 5.5 6 Q5.5 3.5 7.5 3 Z" fill="#0f1f2a"/></svg><div class="t" style="left:1109px;top:82.8px;font-size:14px;color:#5c5c5c"><u>F</u>ile</div><div class="t" style="left:1148.5px;top:82.8px;font-size:14px;color:#5c5c5c"><u>E</u>dit</div><div class="t" style="left:1191px;top:82.8px;font-size:14px;color:#5c5c5c"><u>V</u>iew</div><div class="t" style="left:1239.6px;top:82.8px;font-size:14px;color:#5c5c5c">Se<u>t</u>up</div><div class="t" style="left:1294.6px;top:82.8px;font-size:14px;color:#5c5c5c">M<u>u</u>ltistage</div><div class="t" style="left:1382.3px;top:82.8px;font-size:14px;color:#5c5c5c"><u>C</u>omponents</div><div class="t" style="left:1486px;top:82.8px;font-size:14px;color:#5c5c5c"><u>S</u>olver</div><div class="t" style="left:1543.5px;top:82.8px;font-size:14px;color:#5c5c5c">Sta<u>n</u>dard Screens</div><div class="t" style="left:1673.4px;top:82.8px;font-size:14px;color:#5c5c5c"><u>M</u>echanical</div><div class="t" style="left:1767px;top:82.8px;font-size:14px;color:#5c5c5c">Ac<u>o</u>ustics</div><div class="t" style="left:1848.2px;top:82.8px;font-size:14px;color:#5c5c5c"><u>A</u>gile</div><div class="t" style="left:1080px;top:106.5px;font-size:14px;color:#5c5c5c">Co<u>r</u>relation</div><div class="t" style="left:1171.4px;top:106.5px;font-size:14px;color:#5c5c5c"><u>W</u>indow</div><div class="t" style="left:1243.6px;top:106.5px;font-size:14px;color:#5c5c5c"><u>H</u>elp</div><div class="a" style="left:1891px;top:103px;width:22px;height:22px;background:#e4e4e4"></div><div class="a" style="left:1915px;top:103px;width:22px;height:22px;background:#e4e4e4"></div><div class="a" style="left:1938px;top:103px;width:22px;height:22px;background:#e4e4e4"></div><div class="a" style="left:1897px;top:117px;width:8px;height:3px;background:#8797a8"></div><svg class="a" style="left:1920px;top:108px" width="12" height="12" viewBox="0 0 12 12" fill="none" stroke="#8797a8" stroke-width="1.6"><rect x="1" y="4.5" width="7" height="6"/><path d="M3.5 3 V1 H10.5 V7 H8.5"/></svg><svg class="a" style="left:1944px;top:109px" width="11" height="11" viewBox="0 0 11 11"><path d="M1.5 1.5 L9.5 9.5 M9.5 1.5 L1.5 9.5" stroke="#8797a8" stroke-width="2.2"/></svg>
<div class="a" style="left:1071px;top:125px;width:891px;height:1px;background:#e8e8e8"></div><div class="a" style="left:1082px;top:168px;width:633px;height:1px;background:#a8a8a8"></div><div class="a" style="left:1717px;top:126px;width:1px;height:92px;background:#e0e0e0"></div><div class="a" style="left:1202.7px;top:129px;width:1px;height:34px;background:#9a9a9a"></div><div class="a" style="left:1330.2px;top:129px;width:1px;height:34px;background:#9a9a9a"></div><div class="a" style="left:1457.8px;top:129px;width:1px;height:34px;background:#9a9a9a"></div><div class="a" style="left:1545.6px;top:129px;width:1px;height:34px;background:#9a9a9a"></div><div class="a" style="left:1632.8px;top:129px;width:1px;height:34px;background:#9a9a9a"></div><svg class="a" style="left:1082px;top:126px" width="640" height="40" viewBox="1082 126 640 40" fill="none" stroke="#000" stroke-width="2.4" stroke-linejoin="round"><path d="M1088 132 H1101 L1109 140 V159.5 H1088 Z"/><path d="M1101 132 V140 H1109"/><path d="M1125 157 V139 H1134 L1137 142 H1146 V149"/><path d="M1125 157 L1131 149 H1152 L1146 157 Z"/><path d="M1165 132.5 H1184 L1191.5 140 V159.5 H1165 Z"/><rect x="1169" y="136" width="14" height="5" fill="#000" stroke="none"/><circle cx="1178" cy="151.5" r="3.5" fill="#000" stroke="none"/><path d="M1216 132.5 L1236 145.5 L1216 158.5 Z" fill="#000"/><path d="M1253 133 H1260 Q1260 129 1263 129 Q1266 129 1266 133 H1272 V140 Q1276 140 1276 143 Q1276 146 1272 146 V159 H1253 V151 Q1257 151 1257 148 Q1257 145 1253 145 Z" stroke-width="1.8"/><path d="M1271 131 L1279 137 L1271 142 Z" fill="#000" stroke="none"/><path d="M1295 137 V132 H1311 V137" stroke-width="1.8"/><path d="M1300 141 H1312 V137 H1316 V141 H1319 V160 H1299 V141" stroke-width="2.2"/><rect x="1340.5" y="131.5" width="26" height="28" rx="2" stroke-width="2.6"/><path d="M1340.5 135 H1366.5" stroke-width="5"/><path d="M1353.5 134 V159.5 M1340.5 147 H1366.5" stroke-width="2.6"/><path d="M1383 131.5 H1397 L1404 138.5 V159.5 H1383 Z M1397 131.5 V138.5 H1404"/><path d="M1386 145 H1401 M1386 150 H1401 M1386 155 H1401" stroke-width="1.8"/><path d="M1422 131.5 H1436 L1444 139.5 V159.5 H1422 Z M1436 131.5 V139.5 H1444" stroke="#a8a8a8" stroke-width="2"/><path d="M1433 144 V152 M1433 155 V157" stroke="#a8a8a8" stroke-width="2"/><path d="M1467 158 L1496 136 V158 Z" fill="#000" stroke-width="1.6"/><path d="M1470 156 L1495 146.5" stroke="#fff" stroke-width="1.6"/><path d="M1507 132 V160 H1535" stroke-width="2.2"/><path d="M1510 133 Q1513 143 1521 146 Q1530 150 1530 157" stroke-width="2"/><path d="M1515 131 Q1518 139 1525 141 Q1535 145 1535 154" stroke-width="2"/><circle cx="1565" cy="143" r="10.5" stroke-width="2.2"/><path d="M1573 151 L1582 160" stroke-width="2.4"/><path d="M1604 157 L1598 148 Q1597 145 1600 145 L1605 150 V135 Q1605 132 1607.5 132 Q1610 132 1610 135 V143 V132 Q1610 129 1612.5 129 Q1615 129 1615 132 V143 V133 Q1615 130.5 1617.5 130.5 Q1620 130.5 1620 133 V155 Q1620 161 1613 161 Q1607 161 1604 157 Z" stroke-width="1.7"/></svg>
<div class="a" style="left:1072px;top:170px;width:7px;height:44px;background:#b4b4b4"></div><svg class="a" style="left:1083.75px;top:176.5px" width="30" height="30" viewBox="0 0 30 30"><rect x="2" y="2" width="26" height="26" rx="4" fill="#fff" stroke="#000" stroke-width="2.4"/><path d="M15 2 H24 Q28 2 28 6 V15 H15 Z" fill="#000"/><path d="M2 15 H28 M15 15 V28" stroke="#000" stroke-width="2.2"/><text x="21.5" y="13.5" text-anchor="middle" font-family="Liberation Sans" font-weight="bold" font-size="11.5" fill="#fff">1</text></svg><svg class="a" style="left:1123.75px;top:176.5px" width="30" height="30" viewBox="0 0 30 30"><rect x="2" y="2" width="26" height="26" rx="4" fill="#fff" stroke="#000" stroke-width="2.4"/><path d="M15 2 H24 Q28 2 28 6 V15 H15 Z" fill="#000"/><path d="M2 15 H28 M15 15 V28" stroke="#000" stroke-width="2.2"/><text x="21.5" y="13.5" text-anchor="middle" font-family="Liberation Sans" font-weight="bold" font-size="11.5" fill="#fff">2</text></svg><svg class="a" style="left:1163.75px;top:176.5px" width="30" height="30" viewBox="0 0 30 30"><rect x="2" y="2" width="26" height="26" rx="4" fill="#fff" stroke="#000" stroke-width="2.4"/><path d="M15 2 H24 Q28 2 28 6 V15 H15 Z" fill="#000"/><path d="M2 15 H28 M15 15 V28" stroke="#000" stroke-width="2.2"/><text x="21.5" y="13.5" text-anchor="middle" font-family="Liberation Sans" font-weight="bold" font-size="11.5" fill="#fff">3</text></svg><svg class="a" style="left:1203.75px;top:176.5px" width="30" height="30" viewBox="0 0 30 30"><rect x="2" y="2" width="26" height="26" rx="4" fill="#fff" stroke="#000" stroke-width="2.4"/><path d="M15 2 H24 Q28 2 28 6 V15 H15 Z" fill="#000"/><path d="M2 15 H28 M15 15 V28" stroke="#000" stroke-width="2.2"/><text x="21.5" y="13.5" text-anchor="middle" font-family="Liberation Sans" font-weight="bold" font-size="11.5" fill="#fff">4</text></svg><svg class="a" style="left:1243.75px;top:176.5px" width="30" height="30" viewBox="0 0 30 30"><rect x="2" y="2" width="26" height="26" rx="4" fill="#fff" stroke="#000" stroke-width="2.4"/><path d="M15 2 H24 Q28 2 28 6 V15 H15 Z" fill="#000"/><path d="M2 15 H28 M15 15 V28" stroke="#000" stroke-width="2.2"/><text x="21.5" y="13.5" text-anchor="middle" font-family="Liberation Sans" font-weight="bold" font-size="11.5" fill="#fff">5</text></svg><div class="a" style="left:1283px;top:175px;width:1px;height:35px;background:#9a9a9a"></div><div class="a" style="left:1287.5px;top:174.5px;width:249px;height:35.5px;background:#c9c9c9"></div><div class="t" style="left:1292px;top:184px;font-size:17.6px;color:#8c8c8c">All</div><svg class="a" style="left:1518px;top:188px" width="12" height="8" viewBox="0 0 12 8"><path d="M1 1 L6 6 L11 1" fill="none" stroke="#a8a8a8" stroke-width="1.2"/></svg><div class="a" style="left:1540px;top:175px;width:1px;height:35px;background:#9a9a9a"></div><div class="a" style="left:1545px;top:174.5px;width:124px;height:35.5px;background:#e1e1e1;border:1px solid #adadad;box-sizing:border-box"></div><div class="t" style="left:1550px;top:184px;font-size:17.6px;color:#000">Stage 1</div><svg class="a" style="left:1651px;top:188px" width="12" height="8" viewBox="0 0 12 8"><path d="M1 1 L6 6 L11 1" fill="none" stroke="#333" stroke-width="1.2"/></svg><div class="a" style="left:1672px;top:175px;width:1px;height:35px;background:#9a9a9a"></div><svg class="a" style="left:1680px;top:177px" width="32" height="32" viewBox="0 0 32 32"><circle cx="16" cy="15.5" r="15" fill="#000"/><path d="M11 12 Q11 6.5 16 6.5 Q21.5 6.5 21.5 11.5 Q21.5 14.5 18.5 16 Q16.5 17 16.5 19.5" fill="none" stroke="#fff" stroke-width="3.6"/><circle cx="16.5" cy="24" r="2.3" fill="#fff"/></svg>
<div class="a" style="left:1071px;top:215px;width:891px;height:1px;background:#e6e6e6"></div><div class="a" style="left:1071px;top:217.5px;width:891px;height:1.5px;background:#8a8a8a"></div><div class="a" style="left:1072px;top:219px;width:1.5px;height:560px;background:#9a9a9a"></div><div class="a" style="left:1071px;top:778px;width:891px;height:26px;background:#f0f0f0;border-top:1px solid #fafafa;box-sizing:border-box"></div><div class="t" style="left:1073px;top:786.5px;font-size:13.6px;color:#000">31.615901, 7.845046</div>
<!-- compal plot -->
<svg class="a" style="left:1074px;top:219px" width="888" height="559" viewBox="1074 219 888 559">
<defs><pattern id="hatch" patternUnits="userSpaceOnUse" width="7.07" height="7.07" patternTransform="rotate(45)"><rect width="7.07" height="7.07" fill="#fff"/><path d="M0.85 0 V7.07" stroke="#000" stroke-width="1.8"/></pattern><pattern id="salm" patternUnits="userSpaceOnUse" width="3" height="3" patternTransform="rotate(45)"><rect width="3" height="3" fill="#f6b896"/><path d="M0 0 V3" stroke="#e9a080" stroke-width="0.8"/></pattern><pattern id="blu" patternUnits="userSpaceOnUse" width="3" height="3"><rect width="3" height="3" fill="#9fd2fa"/><rect x="0" y="0" width="1.5" height="1.5" fill="#3c8ad6"/><rect x="1.5" y="1.5" width="1.5" height="1.5" fill="#5aa6ea"/></pattern></defs><text x="1780" y="258.5" text-anchor="middle" font-family="Liberation Sans" font-size="13.5" fill="#000">Analysis Mode</text><path d="M1153.5 299.5 V698.2 H1700" stroke="#000" stroke-width="1.7" fill="none"/><path d="M1153.5 308.6 H1159" stroke="#000" stroke-width="1"/><path d="M1153.5 358.2 H1159" stroke="#000" stroke-width="1"/><path d="M1153.5 407.3 H1159" stroke="#000" stroke-width="1"/><path d="M1153.5 504 H1159" stroke="#000" stroke-width="1"/><path d="M1153.5 552.3 H1159" stroke="#000" stroke-width="1"/><path d="M1153.5 600.7 H1159" stroke="#000" stroke-width="1"/><path d="M1153.5 649.8 H1159" stroke="#000" stroke-width="1"/><path d="M1153.5 455.6 H1164" stroke="#000" stroke-width="1"/><path d="M1201.7 698 V692.5" stroke="#000" stroke-width="1"/><path d="M1250.5 698 V692.5" stroke="#000" stroke-width="1"/><path d="M1298.8 698 V692.5" stroke="#000" stroke-width="1"/><path d="M1347.1 698 V692.5" stroke="#000" stroke-width="1"/><path d="M1685.5 698 V692.5" stroke="#000" stroke-width="1"/><path d="M1395.5 698 V688 M1637.2 698 V688" stroke="#000" stroke-width="1"/><g font-family="Liberation Sans" font-size="13" fill="#000"><text x="1110" y="457" text-anchor="middle">10.0</text><text x="1407" y="719.3" text-anchor="middle">10.0</text><text x="1649.3" y="719.3" text-anchor="middle">20.0</text></g><text x="1502" y="767" text-anchor="middle" font-family="Liberation Sans" font-size="19" fill="#000">Z (mm)</text><text transform="translate(1107,506) rotate(-90)" text-anchor="middle" font-family="Liberation Sans" font-size="19" fill="#000">R (mm)</text><path d="M1406.3 643 C1470 632 1535 575 1553.4 444 L1556 444 V698 H1406.3 Z" fill="url(#hatch)"/><path d="M1406.3 643 C1470 632 1535 575 1553.4 444" fill="none" stroke="#000" stroke-width="1.2"/><path d="M1406.3 589 C1480 575 1530 520 1533 460 L1534 445.6 H1553.4 C1540 560 1490 632 1406.3 643 Z" fill="url(#salm)" stroke="#000" stroke-width="1.2"/><path d="M1533.2 393.2 H1700 V419.4 H1550.2 V444.8 H1533.2 Z" fill="url(#blu)" stroke="#000" stroke-width="1.2"/><path d="M1550.2 419.4 H1700" stroke="#000" stroke-width="0.8" stroke-dasharray="1.5,1.5"/><path d="M1555.4 437.5 H1561.4 V691.3 H1617.8 V698 H1555.4 Z" fill="url(#blu)" stroke="#000" stroke-width="1.2"/><rect x="1554.5" y="594" width="5" height="11" fill="#000"/></svg>
<div id="compal-content"></div>
<!-- ===== AXCENT WINDOW ===== -->
<div class="a" style="left:1695px;top:290px;width:738px;height:884px;background:#fff;border:1px solid #6a6a6a;box-sizing:border-box;box-shadow:0 2px 18px 3px rgba(0,0,0,0.30)"></div>
<svg class="a" style="left:1706px;top:299px" width="20" height="20" viewBox="-10 -10 20 20"><defs><radialGradient id="sg1" cx="0.45" cy="0.35" r="0.7"><stop offset="0" stop-color="#8a949a"/><stop offset="0.5" stop-color="#3e464c"/><stop offset="1" stop-color="#15191c"/></radialGradient></defs><circle r="9" fill="url(#sg1)"/><circle r="4.05" cy="0.9" fill="none" stroke="#6a747a" stroke-width="0.8"/></svg><div class="t" style="left:1731.5px;top:303px;font-size:15px;color:#000">AxCent - [AxCent3 / 3D ]</div><div class="a" style="left:2279px;top:309px;width:12px;height:1px;background:#111"></div><div class="a" style="left:2336.5px;top:303px;width:13px;height:13px;border:1px solid #111;box-sizing:border-box"></div><svg class="a" style="left:2395.5px;top:303px" width="13" height="13" viewBox="0 0 13 13"><path d="M0.3 0.3 L12.7 12.7 M12.7 0.3 L0.3 12.7" stroke="#111" stroke-width="1.1"/></svg>
<svg class="a" style="left:1705px;top:330px" width="20" height="20" viewBox="-10 -10 20 20"><defs><radialGradient id="sg2" cx="0.45" cy="0.35" r="0.7"><stop offset="0" stop-color="#8a949a"/><stop offset="0.5" stop-color="#3e464c"/><stop offset="1" stop-color="#15191c"/></radialGradient></defs><circle r="9" fill="url(#sg2)"/><circle r="4.05" cy="0.9" fill="none" stroke="#6a747a" stroke-width="0.8"/></svg><div class="t" style="left:1734px;top:334.3px;font-size:14px;color:#000"><u>F</u>ile</div><div class="t" style="left:1773.5px;top:334.3px;font-size:14px;color:#000"><u>E</u>dit</div><div class="t" style="left:1816px;top:334.3px;font-size:14px;color:#000"><u>V</u>iew</div><div class="t" style="left:1865px;top:334.3px;font-size:14px;color:#000">Se<u>t</u>up</div><div class="t" style="left:1920px;top:334.3px;font-size:14px;color:#000">Fl<u>o</u>w</div><div class="t" style="left:1968.3px;top:334.3px;font-size:14px;color:#000"><u>G</u>eometry</div><div class="t" style="left:2051.3px;top:334.3px;font-size:14px;color:#000">Gr<u>a</u>phics</div><div class="t" style="left:2125.7px;top:334.3px;font-size:14px;color:#000"><u>S</u>tandard Screens</div><div class="t" style="left:2255.5px;top:334.3px;font-size:14px;color:#000"><u>C</u>FD</div><div class="t" style="left:2300.9px;top:334.3px;font-size:14px;color:#000"><u>M</u>echanical</div><div class="t" style="left:1704.6px;top:358.3px;font-size:14px;color:#000"><u>A</u>gile</div><div class="t" style="left:1756px;top:358.3px;font-size:14px;color:#000"><u>W</u>indow</div><div class="t" style="left:1828.3px;top:358.3px;font-size:14px;color:#000"><u>H</u>elp</div><div class="a" style="left:2361.5px;top:354.7px;width:21px;height:21.4px;background:#f0f0f0;border:1px solid #e2e2e2;box-sizing:border-box"></div><div class="a" style="left:2385px;top:354.7px;width:21.5px;height:21.4px;background:#f0f0f0;border:1px solid #e2e2e2;box-sizing:border-box"></div><div class="a" style="left:2409.3px;top:354.7px;width:20.5px;height:21.4px;background:#f0f0f0;border:1px solid #e2e2e2;box-sizing:border-box"></div><div class="a" style="left:2367px;top:368px;width:8px;height:3px;background:#8797a8"></div><svg class="a" style="left:2390px;top:360px" width="12" height="12" viewBox="0 0 12 12" fill="none" stroke="#8797a8" stroke-width="1.6"><rect x="1" y="4.5" width="7" height="6"/><path d="M3.5 3 V1 H10.5 V7 H8.5"/></svg><svg class="a" style="left:2414px;top:361px" width="11" height="11" viewBox="0 0 11 11"><path d="M1.5 1.5 L9.5 9.5 M9.5 1.5 L1.5 9.5" stroke="#8797a8" stroke-width="2.2"/></svg>
<div class="a" style="left:1705px;top:376px;width:634px;height:31px;background:#f0f0f0"></div><div class="a" style="left:1705px;top:407px;width:634px;height:2px;background:#d4d4d4"></div><div class="a" style="left:1705px;top:409px;width:634px;height:31px;background:#f0f0f0"></div><div class="a" style="left:1700px;top:440px;width:639px;height:2px;background:#cfcfcf"></div><div class="a" style="left:2338px;top:376px;width:1.5px;height:64px;background:#d0d0d0"></div><div class="a" style="left:1705px;top:442px;width:447px;height:29px;background:#f0f0f0"></div><div class="a" style="left:2152px;top:442px;width:1px;height:29px;background:#d8d8d8"></div><div class="a" style="left:1696px;top:443px;width:9px;height:28px;background:#427f7f"></div><div class="a" style="left:1696px;top:406px;width:9px;height:1px;background:#d0d0d0"></div><div class="a" style="left:1696px;top:438px;width:9px;height:3px;background:#b8b8b8"></div><div class="a" style="left:1696px;top:470.5px;width:736px;height:3.5px;background:#8e8e8e"></div><svg class="a" style="left:2020.5px;top:389.5px" width="1" height="1" viewBox="0 0 22 22"></svg><div class="a" style="left:2007.3px;top:378px;width:28.4px;height:24.5px;background:#cce4f7;border:1px solid #a8d0f0;box-sizing:border-box"></div><svg class="a" style="left:1708.0px;top:379.0px" width="22" height="22" viewBox="0 0 22 22"><path d="M4.5 2.5 H13 L17.5 7 V19.5 H4.5 Z" fill="#fff" stroke="#000" stroke-width="1.3"/></svg><svg class="a" style="left:1737.0px;top:379.0px" width="22" height="22" viewBox="0 0 22 22"><path d="M2 18 V7 H8 L9.5 9 H15 V12" fill="#ffff66" stroke="#000" stroke-width="1.2"/><path d="M2 18 L6 11 H20 L16 18 Z" fill="#a0a000" stroke="#000" stroke-width="1.2"/><path d="M12 5 Q16 1 19 5 L20 3" fill="none" stroke="#000" stroke-width="1.2"/></svg><svg class="a" style="left:1765.0px;top:379.0px" width="22" height="22" viewBox="0 0 22 22"><rect x="3" y="3" width="16" height="17" fill="#808000" stroke="#000" stroke-width="1.4"/><rect x="6" y="3.5" width="10" height="6" fill="#000"/><rect x="6" y="13" width="10" height="7" fill="#000"/><rect x="12" y="15" width="2.5" height="4" fill="#fff"/></svg><svg class="a" style="left:1794.0px;top:379.0px" width="22" height="22" viewBox="0 0 22 22"><path d="M6 4 H15 V9 H6 Z" fill="#fff" stroke="#222" stroke-width="1.2"/><path d="M2.5 10 H19.5 V17 H2.5 Z" fill="#c8c8c8" stroke="#222" stroke-width="1.3"/><path d="M4 19 H18" stroke="#222" stroke-width="1.5"/><rect x="12" y="13" width="4" height="1.5" fill="#ff0"/></svg><svg class="a" style="left:1829.6px;top:379.0px" width="22" height="22" viewBox="0 0 22 22"><path d="M6 13 Q4 5 12 5 Q18 5 17 12 Q16 16 13 16" fill="none" stroke="#00008a" stroke-width="2"/><path d="M3 9 L5 16 L10 13 Z" fill="#00008a"/></svg><svg class="a" style="left:1858.5px;top:379.0px" width="22" height="22" viewBox="0 0 22 22"><path d="M16 13 Q18 5 10 5 Q4 5 5 12 Q6 16 9 16" fill="none" stroke="#aaa" stroke-width="2"/><path d="M19 9 L17 16 L12 13 Z" fill="#aaa"/></svg><svg class="a" style="left:1887.0px;top:379.0px" width="22" height="22" viewBox="0 0 22 22"><rect x="4" y="9.5" width="14" height="3" fill="#aaa"/></svg><svg class="a" style="left:1915.0px;top:379.0px" width="22" height="22" viewBox="0 0 22 22"><rect x="4" y="9.5" width="14" height="3" fill="#aaa"/><rect x="9.5" y="4" width="3" height="14" fill="#aaa"/></svg><svg class="a" style="left:1953.0px;top:379.0px" width="22" height="22" viewBox="0 0 22 22"><rect x="2.5" y="2.5" width="16" height="12" fill="none" stroke="#000" stroke-width="1.3" stroke-dasharray="2,1.5"/><circle cx="12" cy="12" r="4" fill="#e0f4ff" stroke="#0050d0" stroke-width="1.5"/><path d="M15 15 L19 19" stroke="#0070ff" stroke-width="2"/></svg><svg class="a" style="left:1981.0px;top:379.0px" width="22" height="22" viewBox="0 0 22 22"><path d="M5 12 L4 9 Q5 7 7 9 V5 Q8 3 9.5 5 V4 Q11 2 12.5 4 V5 Q14 3 15.5 5 V7 Q17 6 18 8 V13 Q17 19 12 19 Q8 19 5 12 Z" fill="#fff" stroke="#000" stroke-width="1.4"/></svg><svg class="a" style="left:2010.0px;top:379.0px" width="22" height="22" viewBox="0 0 22 22"><path d="M6 11 Q5 4 11 4 Q17 4 16 10 Q15 14 11 14" fill="none" stroke="#000" stroke-width="3"/><path d="M6 11 Q5 4 11 4 Q17 4 16 10 Q15 14 11 14" fill="none" stroke="#00c000" stroke-width="1.6"/><path d="M9 11 L12 17 L15 13 Z" fill="#00c000" stroke="#000" stroke-width="0.8"/><path d="M2 9 L6 13 L9 9" fill="#00c000" stroke="#000" stroke-width="0.8"/></svg><svg class="a" style="left:2038.0px;top:379.0px" width="22" height="22" viewBox="0 0 22 22"><circle cx="9" cy="9" r="6" fill="#c8f4ff" stroke="#000" stroke-width="1.6"/><path d="M6 9 H12 M9 6 V12" stroke="#a000a0" stroke-width="1.4"/><path d="M13 13 L19 19" stroke="#000" stroke-width="2.6"/></svg><svg class="a" style="left:2066.0px;top:379.0px" width="22" height="22" viewBox="0 0 22 22"><circle cx="9" cy="9" r="6" fill="#c8f4ff" stroke="#000" stroke-width="1.6"/><path d="M6 9 H12" stroke="#a000a0" stroke-width="1.4"/><path d="M13 13 L19 19" stroke="#000" stroke-width="2.6"/></svg><svg class="a" style="left:2095.0px;top:379.0px" width="22" height="22" viewBox="0 0 22 22"><circle cx="11" cy="11" r="5" fill="none" stroke="#000" stroke-width="1.5"/><path d="M11 2 V20 M2 11 H20" stroke="#000" stroke-width="1.5"/></svg><svg class="a" style="left:2124.0px;top:379.0px" width="22" height="22" viewBox="0 0 22 22"><path d="M3 3 L9 18 L11 12 L17 18 L19 16 L13 10 L18 8 Z" fill="#fff" stroke="#000" stroke-width="1.4"/><circle cx="13" cy="3" r="1" fill="#000"/></svg><svg class="a" style="left:2160.0px;top:379.0px" width="22" height="22" viewBox="0 0 22 22"><path d="M4 14 Q6 8 11 6 Q15 4 18 8 Q20 14 14 17 Q8 20 4 14 Z" fill="#a6a6a6"/></svg><svg class="a" style="left:2189.0px;top:379.0px" width="22" height="22" viewBox="0 0 22 22"><path d="M3 14 H10 Q15 14 15 8 V3 M12 6 L16 10 M3 17 H9" fill="none" stroke="#a6a6a6" stroke-width="2.4"/></svg><svg class="a" style="left:2219.0px;top:379.0px" width="22" height="22" viewBox="0 0 22 22"><rect x="4" y="3" width="14" height="16" fill="none" stroke="#a6a6a6" stroke-width="1.3"/><path d="M6 7 H16 M6 10 H16 M6 13 H16 M6 16 H16" stroke="#a6a6a6" stroke-width="1"/></svg><div class="a" style="left:1822.8px;top:380px;width:1px;height:22px;background:#9a9a9a"></div><div class="a" style="left:1945.3px;top:380px;width:1px;height:22px;background:#9a9a9a"></div><div class="a" style="left:2153.8px;top:380px;width:1px;height:22px;background:#9a9a9a"></div><div class="a" style="left:2248.2px;top:380px;width:1px;height:22px;background:#9a9a9a"></div><svg class="a" style="left:1707.0px;top:413.0px" width="22" height="22" viewBox="0 0 22 22"><path d="M3 18 H9 Q17 18 17 9 V3 H20 V10 Q20 20 9 20 H3 Z" fill="#fff" stroke="#000" stroke-width="1.2"/><path d="M1 14 H9 Q14 14 15 5" fill="none" stroke="#2040ff" stroke-width="1.6"/><path d="M1 16 H9 Q16 16 17 6" fill="none" stroke="#8090ff" stroke-width="1"/></svg><svg class="a" style="left:1735.0px;top:413.0px" width="22" height="22" viewBox="0 0 22 22"><path d="M9 3 Q3 11 9 19 M16 3 Q10 11 16 19" fill="none" stroke="#ff0000" stroke-width="2.2"/></svg><svg class="a" style="left:1764.6px;top:413.0px" width="22" height="22" viewBox="0 0 22 22"><path d="M4 20 L6 5 H10 L11 20 Z" fill="#ff0000"/><path d="M14 18 L15 3 H18 L19 18 Z" fill="#008000"/><path d="M2 12 H18" stroke="#000" stroke-width="1.3"/><path d="M15 20 H20" stroke="#999" stroke-width="2"/></svg><svg class="a" style="left:1793.0px;top:413.0px" width="22" height="22" viewBox="0 0 22 22"><path d="M11 2 L19 6.5 V15.5 L11 20 L3 15.5 V6.5 Z" fill="#008888" stroke="#0030e0" stroke-width="1.4"/><path d="M6 11 L10 14 L17 7" fill="none" stroke="#fff" stroke-width="1.5"/></svg><svg class="a" style="left:1822.0px;top:413.0px" width="22" height="22" viewBox="0 0 22 22"><path d="M2 12 L8 9 H14 L18 3 V14 L14 19 H2 Z" fill="#00a000" stroke="#000" stroke-width="1.2"/><path d="M5 10 V19 M9 9 V19 M2 14 H14 M14 9 L18 5" stroke="#000" stroke-width="0.9"/></svg><svg class="a" style="left:1851.0px;top:413.0px" width="22" height="22" viewBox="0 0 22 22"><path d="M2 19 V12 L7 8 L12 12 V19 Z M12 12 L18 4 V14" fill="#a6a6a6" stroke="#a6a6a6"/></svg><svg class="a" style="left:1879.0px;top:413.0px" width="22" height="22" viewBox="0 0 22 22"><rect x="3" y="4" width="12" height="15" fill="#a6a6a6"/><path d="M5 9 H13 M5 13 H13 M8 9 V19 M11 9 V19" stroke="#eee" stroke-width="1"/><path d="M15 5 L19 3 V14 L15 18" fill="#a6a6a6"/></svg><svg class="a" style="left:1908.0px;top:413.0px" width="22" height="22" viewBox="0 0 22 22"><rect x="3" y="3" width="16" height="16" fill="none" stroke="#a6a6a6" stroke-width="1.5"/><path d="M8 3 V19 M13 3 V19 M3 8 H19" stroke="#a6a6a6" stroke-width="1"/></svg><svg class="a" style="left:1937.0px;top:413.0px" width="22" height="22" viewBox="0 0 22 22"><path d="M3 10 Q11 16 19 10 L17 14 Q11 18 5 14 Z M11 2 V9 M8 6 L11 9 L14 6" fill="#a6a6a6" stroke="#a6a6a6" stroke-width="1.5"/></svg><svg class="a" style="left:1974.0px;top:413.0px" width="22" height="22" viewBox="0 0 22 22"><path d="M3 19 V4 M3 19 H19 M4 14 L9 9 L13 12 L18 6" fill="none" stroke="#a6a6a6" stroke-width="1.2"/></svg><svg class="a" style="left:2002.8px;top:413.0px" width="22" height="22" viewBox="0 0 22 22"><path d="M3 19 V14 H10 Q14 14 14 9 V3 H20 V11 Q20 19 11 19 Z" fill="#999" stroke="#000" stroke-width="1.3"/><path d="M20 3 V11 Q20 19 11 19 H3" fill="none" stroke="#ff0000" stroke-width="1.2"/><path d="M14 20 L18 16" stroke="#0040c0" stroke-width="1.2"/></svg><svg class="a" style="left:2032.0px;top:413.0px" width="22" height="22" viewBox="0 0 22 22"><path d="M2 19 V12 H9 Q13 12 13 7 V2 H19 V10 Q19 19 10 19 Z" fill="#999" stroke="#000" stroke-width="1.3"/><path d="M2 12 H9 Q13 12 13 7 V2" fill="none" stroke="#ff0000" stroke-width="1.2"/><path d="M5 3 L9 7" stroke="#0040c0" stroke-width="1.2"/></svg><svg class="a" style="left:2068.0px;top:413.0px" width="22" height="22" viewBox="0 0 22 22"><path d="M3 3 V19 H19" fill="none" stroke="#000" stroke-width="1.6"/><path d="M5 9 L9 6 L13 9 L17 6 M5 14 L10 12 L17 13" fill="none" stroke="#ff2020" stroke-width="1" stroke-dasharray="1.5,1"/></svg><svg class="a" style="left:2096.0px;top:413.0px" width="22" height="22" viewBox="0 0 22 22"><path d="M2 18 V4 M2 18 H13 M3 12 L7 7 L11 10" fill="none" stroke="#a6a6a6" stroke-width="1"/><rect x="11" y="8" width="8" height="12" fill="none" stroke="#a6a6a6" stroke-width="1.2"/></svg><svg class="a" style="left:2125.0px;top:413.0px" width="22" height="22" viewBox="0 0 22 22"><path d="M6 7 Q6 2.5 11 2.5 Q16 2.5 16 7 Q16 10 12 12 V14" fill="none" stroke="#000" stroke-width="4"/><path d="M6 7 Q6 2.5 11 2.5 Q16 2.5 16 7 Q16 10 12 12 V14" fill="none" stroke="#ffff00" stroke-width="2"/><circle cx="12" cy="18" r="2.2" fill="#ffff00" stroke="#000" stroke-width="1"/></svg><svg class="a" style="left:2154.0px;top:413.0px" width="22" height="22" viewBox="0 0 22 22"><path d="M2 2 L6 18 L8 12 L12 17 L14 15 L10 10 L15 9 Z" fill="#000"/><path d="M12 6 Q12 2 16 2 Q20 2 20 6 Q20 8 17 10 V12" fill="none" stroke="#000090" stroke-width="2.2"/><rect x="16" y="14" width="2.5" height="2.5" fill="#000090"/></svg><div class="a" style="left:1966.6px;top:414px;width:1px;height:22px;background:#9a9a9a"></div><div class="a" style="left:2060.6px;top:414px;width:1px;height:22px;background:#9a9a9a"></div><div class="a" style="left:2183px;top:414px;width:1px;height:22px;background:#9a9a9a"></div><div class="a" style="left:2334px;top:414px;width:1px;height:22px;background:#9a9a9a"></div><svg class="a" style="left:2189.4px;top:413.0px" width="22" height="22" viewBox="0 0 22 22"><path d="M2 6 H19 M2 19 H19" stroke="#000" stroke-width="1.8"/><path d="M3 9 L7 5 H15 L19 3 M3 16 L7 12 H15 L19 10" fill="none" stroke="#2020ff" stroke-width="1.2"/><path d="M5 4 H14 M5 11 H14" stroke="#ff2020" stroke-width="1" stroke-dasharray="1,1"/><text x="15" y="17" text-anchor="middle" font-family="Liberation Sans" font-weight="bold" font-size="15" fill="#ffff00">1</text></svg><svg class="a" style="left:2218.0px;top:413.0px" width="22" height="22" viewBox="0 0 22 22"><path d="M2 6 H19 M2 19 H19" stroke="#000" stroke-width="1.8"/><path d="M3 9 L7 5 H15 L19 3 M3 16 L7 12 H15 L19 10" fill="none" stroke="#2020ff" stroke-width="1.2"/><path d="M5 4 H14 M5 11 H14" stroke="#ff2020" stroke-width="1" stroke-dasharray="1,1"/><text x="15" y="17" text-anchor="middle" font-family="Liberation Sans" font-weight="bold" font-size="15" fill="#ffff00">2</text></svg><svg class="a" style="left:2247.0px;top:413.0px" width="22" height="22" viewBox="0 0 22 22"><path d="M2 6 H19 M2 19 H19" stroke="#000" stroke-width="1.8"/><path d="M3 9 L7 5 H15 L19 3 M3 16 L7 12 H15 L19 10" fill="none" stroke="#2020ff" stroke-width="1.2"/><path d="M5 4 H14 M5 11 H14" stroke="#ff2020" stroke-width="1" stroke-dasharray="1,1"/><text x="15" y="17" text-anchor="middle" font-family="Liberation Sans" font-weight="bold" font-size="15" fill="#ffff00">3</text></svg><svg class="a" style="left:2275.5px;top:413.0px" width="22" height="22" viewBox="0 0 22 22"><path d="M2 6 H19 M2 19 H19" stroke="#000" stroke-width="1.8"/><path d="M3 9 L7 5 H15 L19 3 M3 16 L7 12 H15 L19 10" fill="none" stroke="#2020ff" stroke-width="1.2"/><path d="M5 4 H14 M5 11 H14" stroke="#ff2020" stroke-width="1" stroke-dasharray="1,1"/><text x="15" y="17" text-anchor="middle" font-family="Liberation Sans" font-weight="bold" font-size="15" fill="#ffff00">4</text></svg><svg class="a" style="left:2304.0px;top:413.0px" width="22" height="22" viewBox="0 0 22 22"><path d="M2 6 H19 M2 19 H19" stroke="#000" stroke-width="1.8"/><path d="M3 9 L7 5 H15 L19 3 M3 16 L7 12 H15 L19 10" fill="none" stroke="#2020ff" stroke-width="1.2"/><path d="M5 4 H14 M5 11 H14" stroke="#ff2020" stroke-width="1" stroke-dasharray="1,1"/><text x="15" y="17" text-anchor="middle" font-family="Liberation Sans" font-weight="bold" font-size="15" fill="#ffff00">5</text></svg><svg class="a" style="left:1708.0px;top:445.0px" width="22" height="22" viewBox="0 0 22 22"><path d="M3 3 H19 M6 7 H16 M3 11 H19 M6 15 H16 M4 19 H18" stroke="#a6a6a6" stroke-width="1.5"/></svg><svg class="a" style="left:1736.0px;top:445.0px" width="22" height="22" viewBox="0 0 22 22"><path d="M2 19 V14 L8 10 V3 H14 V10 L18 14 Q18 19 14 19 Z" fill="none" stroke="#a6a6a6" stroke-width="1.2"/></svg><svg class="a" style="left:1765.0px;top:445.0px" width="22" height="22" viewBox="0 0 22 22"><circle cx="11" cy="11" r="8" fill="none" stroke="#a6a6a6" stroke-width="1.3"/><path d="M5 6 L17 16 M7 15 L15 7" stroke="#a6a6a6" stroke-width="1"/></svg><svg class="a" style="left:1793.0px;top:445.0px" width="22" height="22" viewBox="0 0 22 22"><path d="M2 3 H14 V17 H2 Z M2 8 H14 M8 3 V17" fill="none" stroke="#a6a6a6" stroke-width="1.1"/><circle cx="15" cy="16" r="4" fill="#a6a6a6"/></svg><svg class="a" style="left:1831.0px;top:445.0px" width="22" height="22" viewBox="0 0 22 22"><path d="M3 6 L7 3 H19 V17 L15 20 H3 Z M3 6 H15 V20 M15 6 L19 3" fill="none" stroke="#a6a6a6" stroke-width="1.2"/><rect x="9" y="10" width="4" height="8" fill="#a6a6a6"/></svg><svg class="a" style="left:1867.0px;top:445.0px" width="22" height="22" viewBox="0 0 22 22"><path d="M3 2 V20 H19 M4 10 L19 19" fill="none" stroke="#a6a6a6" stroke-width="1.3"/><circle cx="14" cy="6" r="1.2" fill="#a6a6a6"/><circle cx="8" cy="15" r="1.2" fill="#a6a6a6"/></svg><svg class="a" style="left:1895.0px;top:445.0px" width="22" height="22" viewBox="0 0 22 22"><path d="M3 2 V20 H19 M3 6 H19 M3 12 H19 M5 18 L18 4" fill="none" stroke="#a6a6a6" stroke-width="1.3"/></svg><svg class="a" style="left:1924.0px;top:445.0px" width="22" height="22" viewBox="0 0 22 22"><path d="M3 2 V20 H19 M3 6 H8 M3 10 H7 M5 19 Q12 12 17 2" fill="none" stroke="#a6a6a6" stroke-width="1.3"/></svg><svg class="a" style="left:1952.0px;top:445.0px" width="22" height="22" viewBox="0 0 22 22"><path d="M3 7 L7 3 H19 V15 L15 19 H3 Z" fill="#a6a6a6"/><path d="M3 7 H15 V19 M15 7 L19 3" fill="none" stroke="#d8d8d8" stroke-width="1"/></svg><svg class="a" style="left:1981.0px;top:445.0px" width="22" height="22" viewBox="0 0 22 22"><path d="M3 7 L7 3 H19 V15 L15 19 H3 Z" fill="#a6a6a6"/><path d="M3 7 H15 V19 M15 7 L19 3" fill="none" stroke="#d8d8d8" stroke-width="1"/></svg><svg class="a" style="left:2010.0px;top:445.0px" width="22" height="22" viewBox="0 0 22 22"><path d="M3 7 L7 3 H19 V15 L15 19 H3 Z M3 7 H15 V19 M15 7 L19 3 M7 3 V15 H19 M7 15 L3 19" fill="none" stroke="#a6a6a6" stroke-width="1.2"/></svg><svg class="a" style="left:2039.0px;top:445.0px" width="22" height="22" viewBox="0 0 22 22"><path d="M3 3 H10 M6.5 3 V10 M8 19 V15 H12 Q15 15 15 12 V8 H20 V13 Q20 20 13 20 Z" fill="#a6a6a6" stroke="#a6a6a6" stroke-width="1.8"/></svg><svg class="a" style="left:2068.0px;top:445.0px" width="22" height="22" viewBox="0 0 22 22"><path d="M3 10 V3 H7 Q9 3 9 5.5 Q9 8 7 8 H3 M8 19 V15 H12 Q15 15 15 12 V8 H20 V13 Q20 20 13 20 Z" fill="none" stroke="#a6a6a6" stroke-width="1.8"/><path d="M8 19 V15 H12 Q15 15 15 12 V8 H20 V13 Q20 20 13 20 Z" fill="#a6a6a6"/></svg><svg class="a" style="left:2096.0px;top:445.0px" width="22" height="22" viewBox="0 0 22 22"><path d="M3 2 V10 M3 6 Q7 4 7 10 M8 19 V15 H12 Q15 15 15 12 V8 H20 V13 Q20 20 13 20 Z" fill="none" stroke="#a6a6a6" stroke-width="1.8"/><path d="M8 19 V15 H12 Q15 15 15 12 V8 H20 V13 Q20 20 13 20 Z" fill="#a6a6a6"/></svg><svg class="a" style="left:2124.0px;top:445.0px" width="22" height="22" viewBox="0 0 22 22"><path d="M2 19 V13 L8 9 V3 H16 V19 Z M8 9 H16" fill="none" stroke="#a6a6a6" stroke-width="1.3"/><rect x="11" y="12" width="4" height="6" fill="#a6a6a6"/></svg><div class="a" style="left:1823px;top:446px;width:1px;height:22px;background:#9a9a9a"></div><div class="a" style="left:1859px;top:446px;width:1px;height:22px;background:#9a9a9a"></div><div class="a" style="left:1697px;top:474px;width:733px;height:673px;background:#427f7f"></div><svg class="a" style="left:1697px;top:474px" width="733" height="673" viewBox="1697 474 733 673">
<defs>
<radialGradient id="face" cx="0.62" cy="0.40" r="0.8"><stop offset="0" stop-color="#1d5db2"/><stop offset="0.55" stop-color="#174fa0"/><stop offset="1" stop-color="#0f418a"/></radialGradient>
<linearGradient id="cone" x1="0" y1="0" x2="0" y2="1"><stop offset="0" stop-color="#1d5ab0"/><stop offset="0.35" stop-color="#4f92e2"/><stop offset="0.55" stop-color="#2565bb"/><stop offset="1" stop-color="#0f3f88"/></linearGradient>
<linearGradient id="collar" x1="0" y1="0" x2="1" y2="1"><stop offset="0" stop-color="#2d6fc6"/><stop offset="0.5" stop-color="#4a8ad8"/><stop offset="1" stop-color="#1c5cb2"/></linearGradient>
</defs>
<ellipse cx="2165" cy="810.5" rx="203" ry="273.5" fill="#1a54a8" stroke="#0b2e66" stroke-width="1"/><ellipse cx="2162.5" cy="810" rx="184.5" ry="250" fill="url(#face)" stroke="#09285a" stroke-width="1.3"/><ellipse cx="2162" cy="810" rx="181" ry="246" fill="none" stroke="#3a78c8" stroke-width="0.7" opacity="0.5"/><path d="M2060 820 Q2010 900 2030 1000 Q2080 1060 2150 1058 Q2140 930 2110 850 Z" fill="#0e3f88" opacity="0.55"/><path d="M2090 700 Q2180 690 2300 661 L2330 700 Q2200 720 2100 740 Z" fill="#0f4592" opacity="0.5"/><path d="M2100 740 Q2220 760 2340 800 L2343 842 Q2230 800 2110 770 Z" fill="#0f4592" opacity="0.45"/><path d="M2043.7 696.7 L2048.3 688.4 L2052.9 680.1 L2057.6 671.9 L2062.3 663.6 L2067.1 655.5 L2072.0 647.3 L2076.9 639.2 L2081.9 631.2 L2087.0 623.1 L2092.1 615.2 L2097.3 607.2 L2102.5 599.3 L2107.8 591.4 L2113.1 583.6 L2118.5 575.8 L2124.0 568.0 L2133.8 574.9 L2127.9 582.3 L2122.0 589.7 L2116.2 597.1 L2110.4 604.6 L2104.7 612.1 L2099.0 619.6 L2093.4 627.2 L2087.9 634.9 L2082.4 642.6 L2076.9 650.3 L2071.5 658.1 L2066.2 665.9 L2060.9 673.8 L2055.7 681.7 L2050.6 689.7 L2045.5 697.7 Z" fill="#2161b6" stroke="#0b3272" stroke-width="1"/><path d="M2045.5 697.7 L2050.6 689.7 L2055.7 681.7 L2060.9 673.8 L2066.2 665.9 L2071.5 658.1 L2076.9 650.3 L2082.4 642.6 L2087.9 634.9 L2093.4 627.2 L2099.0 619.6 L2104.7 612.1 L2110.4 604.6 L2116.2 597.1 L2122.0 589.7 L2127.9 582.3 L2133.8 574.9" fill="none" stroke="#3f86d8" stroke-width="1.2" opacity="0.7"/><path d="M2043.7 696.7 L2048.3 688.4 L2052.9 680.1 L2057.6 671.9 L2062.3 663.6 L2067.1 655.5 L2072.0 647.3 L2076.9 639.2 L2081.9 631.2 L2087.0 623.1 L2092.1 615.2 L2097.3 607.2 L2102.5 599.3 L2107.8 591.4 L2113.1 583.6 L2118.5 575.8 L2124.0 568.0" fill="none" stroke="#082a60" stroke-width="1.2"/><path d="M2048.0 696.7 L2055.8 688.4 L2063.7 680.1 L2071.8 671.9 L2079.9 663.6 L2088.2 655.5 L2096.6 647.3 L2105.1 639.2 L2113.8 631.2 L2122.5 623.1 L2131.4 615.2 L2140.3 607.2 L2149.4 599.3 L2158.7 591.4 L2168.0 583.6 L2177.4 575.8 L2187.0 568.0 L2194.5 577.3 L2184.6 584.6 L2174.9 591.8 L2165.2 599.1 L2155.6 606.5 L2146.2 613.9 L2136.9 621.3 L2127.6 628.8 L2118.5 636.3 L2109.5 643.9 L2100.6 651.5 L2091.8 659.1 L2083.1 666.8 L2074.5 674.6 L2066.1 682.4 L2057.7 690.2 L2049.5 698.1 Z" fill="#2161b6" stroke="#0b3272" stroke-width="1"/><path d="M2049.5 698.1 L2057.7 690.2 L2066.1 682.4 L2074.5 674.6 L2083.1 666.8 L2091.8 659.1 L2100.6 651.5 L2109.5 643.9 L2118.5 636.3 L2127.6 628.8 L2136.9 621.3 L2146.2 613.9 L2155.6 606.5 L2165.2 599.1 L2174.9 591.8 L2184.6 584.6 L2194.5 577.3" fill="none" stroke="#3f86d8" stroke-width="1.2" opacity="0.7"/><path d="M2048.0 696.7 L2055.8 688.4 L2063.7 680.1 L2071.8 671.9 L2079.9 663.6 L2088.2 655.5 L2096.6 647.3 L2105.1 639.2 L2113.8 631.2 L2122.5 623.1 L2131.4 615.2 L2140.3 607.2 L2149.4 599.3 L2158.7 591.4 L2168.0 583.6 L2177.4 575.8 L2187.0 568.0" fill="none" stroke="#082a60" stroke-width="1.2"/><path d="M2050.0 696.7 L2062.5 689.7 L2075.0 682.8 L2087.4 676.0 L2099.9 669.4 L2112.3 662.9 L2124.7 656.5 L2137.1 650.3 L2149.5 644.2 L2161.9 638.2 L2174.2 632.3 L2186.6 626.6 L2198.9 621.0 L2211.2 615.6 L2223.5 610.3 L2235.7 605.1 L2248.0 600.0 L2252.2 610.2 L2239.8 614.7 L2227.4 619.3 L2214.9 624.1 L2202.5 629.0 L2190.0 634.1 L2177.5 639.3 L2164.9 644.6 L2152.4 650.0 L2139.8 655.6 L2127.2 661.3 L2114.5 667.2 L2101.9 673.2 L2089.2 679.3 L2076.5 685.5 L2063.7 691.9 L2051.0 698.4 Z" fill="#2161b6" stroke="#0b3272" stroke-width="1"/><path d="M2051.0 698.4 L2063.7 691.9 L2076.5 685.5 L2089.2 679.3 L2101.9 673.2 L2114.5 667.2 L2127.2 661.3 L2139.8 655.6 L2152.4 650.0 L2164.9 644.6 L2177.5 639.3 L2190.0 634.1 L2202.5 629.0 L2214.9 624.1 L2227.4 619.3 L2239.8 614.7 L2252.2 610.2" fill="none" stroke="#3f86d8" stroke-width="1.2" opacity="0.7"/><path d="M2050.0 696.7 L2062.5 689.7 L2075.0 682.8 L2087.4 676.0 L2099.9 669.4 L2112.3 662.9 L2124.7 656.5 L2137.1 650.3 L2149.5 644.2 L2161.9 638.2 L2174.2 632.3 L2186.6 626.6 L2198.9 621.0 L2211.2 615.6 L2223.5 610.3 L2235.7 605.1 L2248.0 600.0" fill="none" stroke="#082a60" stroke-width="1.2"/><path d="M2085.0 694.6 L2098.2 692.2 L2111.4 689.8 L2124.6 687.4 L2137.9 685.2 L2151.3 682.9 L2164.7 680.7 L2178.2 678.5 L2191.8 676.4 L2205.3 674.3 L2219.0 672.3 L2232.7 670.3 L2246.4 668.4 L2260.2 666.4 L2274.1 664.6 L2288.0 662.8 L2302.0 661.0 L2303.4 671.9 L2289.4 673.2 L2275.4 674.5 L2261.5 675.9 L2247.7 677.3 L2233.9 678.7 L2220.1 680.2 L2206.5 681.7 L2192.8 683.3 L2179.2 684.9 L2165.7 686.6 L2152.2 688.3 L2138.8 690.1 L2125.4 691.9 L2112.1 693.7 L2098.8 695.6 L2085.6 697.5 Z" fill="#2161b6" stroke="#0b3272" stroke-width="1"/><path d="M2085.6 697.5 L2098.8 695.6 L2112.1 693.7 L2125.4 691.9 L2138.8 690.1 L2152.2 688.3 L2165.7 686.6 L2179.2 684.9 L2192.8 683.3 L2206.5 681.7 L2220.1 680.2 L2233.9 678.7 L2247.7 677.3 L2261.5 675.9 L2275.4 674.5 L2289.4 673.2 L2303.4 671.9" fill="none" stroke="#3f86d8" stroke-width="1.2" opacity="0.7"/><path d="M2085.0 694.6 L2098.2 692.2 L2111.4 689.8 L2124.6 687.4 L2137.9 685.2 L2151.3 682.9 L2164.7 680.7 L2178.2 678.5 L2191.8 676.4 L2205.3 674.3 L2219.0 672.3 L2232.7 670.3 L2246.4 668.4 L2260.2 666.4 L2274.1 664.6 L2288.0 662.8 L2302.0 661.0" fill="none" stroke="#082a60" stroke-width="1.2"/><path d="M2093.7 723.7 L2109.5 723.3 L2125.1 723.2 L2140.7 723.3 L2156.3 723.6 L2171.7 724.2 L2187.1 725.0 L2202.4 726.0 L2217.7 727.2 L2232.8 728.6 L2247.9 730.3 L2263.0 732.2 L2277.9 734.3 L2292.8 736.6 L2307.6 739.2 L2322.3 742.0 L2337.0 745.0 L2334.5 756.7 L2320.1 753.3 L2305.6 750.0 L2291.1 747.0 L2276.4 744.2 L2261.7 741.6 L2246.9 739.2 L2232.0 737.1 L2217.0 735.1 L2201.9 733.4 L2186.7 731.9 L2171.5 730.7 L2156.1 729.6 L2140.7 728.8 L2125.1 728.2 L2109.5 727.8 L2093.8 727.7 Z" fill="#2161b6" stroke="#0b3272" stroke-width="1"/><path d="M2093.8 727.7 L2109.5 727.8 L2125.1 728.2 L2140.7 728.8 L2156.1 729.6 L2171.5 730.7 L2186.7 731.9 L2201.9 733.4 L2217.0 735.1 L2232.0 737.1 L2246.9 739.2 L2261.7 741.6 L2276.4 744.2 L2291.1 747.0 L2305.6 750.0 L2320.1 753.3 L2334.5 756.7" fill="none" stroke="#3f86d8" stroke-width="1.2" opacity="0.7"/><path d="M2093.7 723.7 L2109.5 723.3 L2125.1 723.2 L2140.7 723.3 L2156.3 723.6 L2171.7 724.2 L2187.1 725.0 L2202.4 726.0 L2217.7 727.2 L2232.8 728.6 L2247.9 730.3 L2263.0 732.2 L2277.9 734.3 L2292.8 736.6 L2307.6 739.2 L2322.3 742.0 L2337.0 745.0" fill="none" stroke="#082a60" stroke-width="1.2"/><path d="M2137.5 732.0 L2151.5 737.5 L2165.3 743.1 L2179.0 749.0 L2192.5 755.0 L2205.9 761.2 L2219.1 767.6 L2232.2 774.2 L2245.1 781.0 L2257.9 788.0 L2270.5 795.1 L2283.0 802.5 L2295.3 810.0 L2307.4 817.7 L2319.4 825.6 L2331.3 833.7 L2343.0 842.0 L2336.0 851.7 L2324.7 843.2 L2313.3 834.8 L2301.7 826.5 L2290.0 818.5 L2278.1 810.6 L2266.0 802.9 L2253.8 795.4 L2241.3 788.1 L2228.8 780.9 L2216.0 773.9 L2203.1 767.1 L2190.0 760.5 L2176.8 754.0 L2163.4 747.7 L2149.8 741.6 L2136.1 735.7 Z" fill="#2161b6" stroke="#0b3272" stroke-width="1"/><path d="M2136.1 735.7 L2149.8 741.6 L2163.4 747.7 L2176.8 754.0 L2190.0 760.5 L2203.1 767.1 L2216.0 773.9 L2228.8 780.9 L2241.3 788.1 L2253.8 795.4 L2266.0 802.9 L2278.1 810.6 L2290.0 818.5 L2301.7 826.5 L2313.3 834.8 L2324.7 843.2 L2336.0 851.7" fill="none" stroke="#3f86d8" stroke-width="1.2" opacity="0.7"/><path d="M2137.5 732.0 L2151.5 737.5 L2165.3 743.1 L2179.0 749.0 L2192.5 755.0 L2205.9 761.2 L2219.1 767.6 L2232.2 774.2 L2245.1 781.0 L2257.9 788.0 L2270.5 795.1 L2283.0 802.5 L2295.3 810.0 L2307.4 817.7 L2319.4 825.6 L2331.3 833.7 L2343.0 842.0" fill="none" stroke="#082a60" stroke-width="1.2"/><path d="M2149.5 810.0 L2163.1 815.2 L2176.3 820.6 L2189.1 826.4 L2201.5 832.6 L2213.5 839.0 L2225.1 845.8 L2236.3 852.8 L2247.1 860.2 L2257.4 868.0 L2267.4 876.0 L2277.0 884.4 L2286.1 893.1 L2294.9 902.1 L2303.2 911.4 L2311.2 921.0 L2318.7 931.0 L2310.6 936.9 L2303.6 927.0 L2296.2 917.4 L2288.4 908.1 L2280.1 899.1 L2271.5 890.4 L2262.4 881.9 L2252.9 873.8 L2243.0 865.9 L2232.6 858.4 L2221.8 851.1 L2210.6 844.1 L2199.0 837.5 L2186.9 831.1 L2174.4 825.0 L2161.5 819.2 L2148.1 813.8 Z" fill="#2161b6" stroke="#0b3272" stroke-width="1"/><path d="M2148.1 813.8 L2161.5 819.2 L2174.4 825.0 L2186.9 831.1 L2199.0 837.5 L2210.6 844.1 L2221.8 851.1 L2232.6 858.4 L2243.0 865.9 L2252.9 873.8 L2262.4 881.9 L2271.5 890.4 L2280.1 899.1 L2288.4 908.1 L2296.2 917.4 L2303.6 927.0 L2310.6 936.9" fill="none" stroke="#3f86d8" stroke-width="1.2" opacity="0.7"/><path d="M2149.5 810.0 L2163.1 815.2 L2176.3 820.6 L2189.1 826.4 L2201.5 832.6 L2213.5 839.0 L2225.1 845.8 L2236.3 852.8 L2247.1 860.2 L2257.4 868.0 L2267.4 876.0 L2277.0 884.4 L2286.1 893.1 L2294.9 902.1 L2303.2 911.4 L2311.2 921.0 L2318.7 931.0" fill="none" stroke="#082a60" stroke-width="1.2"/><path d="M2121.0 794.0 L2134.4 804.9 L2147.2 816.1 L2159.6 827.6 L2171.4 839.3 L2182.8 851.4 L2193.6 863.8 L2203.9 876.4 L2213.8 889.4 L2223.1 902.6 L2231.9 916.1 L2240.2 930.0 L2247.9 944.1 L2255.2 958.5 L2262.0 973.2 L2268.2 988.2 L2274.0 1003.5 L2264.6 1006.9 L2259.3 991.8 L2253.5 976.9 L2247.2 962.4 L2240.4 948.1 L2233.1 934.0 L2225.3 920.3 L2216.9 906.7 L2208.1 893.5 L2198.7 880.5 L2188.8 867.8 L2178.4 855.4 L2167.5 843.2 L2156.0 831.3 L2144.1 819.6 L2131.6 808.2 L2118.5 797.1 Z" fill="#2161b6" stroke="#0b3272" stroke-width="1"/><path d="M2118.5 797.1 L2131.6 808.2 L2144.1 819.6 L2156.0 831.3 L2167.5 843.2 L2178.4 855.4 L2188.8 867.8 L2198.7 880.5 L2208.1 893.5 L2216.9 906.7 L2225.3 920.3 L2233.1 934.0 L2240.4 948.1 L2247.2 962.4 L2253.5 976.9 L2259.3 991.8 L2264.6 1006.9" fill="none" stroke="#3f86d8" stroke-width="1.2" opacity="0.7"/><path d="M2121.0 794.0 L2134.4 804.9 L2147.2 816.1 L2159.6 827.6 L2171.4 839.3 L2182.8 851.4 L2193.6 863.8 L2203.9 876.4 L2213.8 889.4 L2223.1 902.6 L2231.9 916.1 L2240.2 930.0 L2247.9 944.1 L2255.2 958.5 L2262.0 973.2 L2268.2 988.2 L2274.0 1003.5" fill="none" stroke="#082a60" stroke-width="1.2"/><path d="M2153.5 822.0 L2161.0 835.5 L2168.0 849.1 L2174.5 862.7 L2180.6 876.4 L2186.2 890.1 L2191.4 903.8 L2196.1 917.6 L2200.4 931.5 L2204.2 945.3 L2207.5 959.3 L2210.4 973.2 L2212.8 987.3 L2214.8 1001.3 L2216.3 1015.4 L2217.4 1029.6 L2218.0 1043.8 L2208.0 1044.1 L2207.8 1030.2 L2207.1 1016.3 L2206.0 1002.4 L2204.4 988.6 L2202.4 974.8 L2200.0 961.0 L2197.0 947.2 L2193.7 933.4 L2189.8 919.7 L2185.5 905.9 L2180.8 892.2 L2175.5 878.5 L2169.9 864.9 L2163.7 851.2 L2157.1 837.6 L2150.0 824.0 Z" fill="#2161b6" stroke="#0b3272" stroke-width="1"/><path d="M2150.0 824.0 L2157.1 837.6 L2163.7 851.2 L2169.9 864.9 L2175.5 878.5 L2180.8 892.2 L2185.5 905.9 L2189.8 919.7 L2193.7 933.4 L2197.0 947.2 L2200.0 961.0 L2202.4 974.8 L2204.4 988.6 L2206.0 1002.4 L2207.1 1016.3 L2207.8 1030.2 L2208.0 1044.1" fill="none" stroke="#3f86d8" stroke-width="1.2" opacity="0.7"/><path d="M2153.5 822.0 L2161.0 835.5 L2168.0 849.1 L2174.5 862.7 L2180.6 876.4 L2186.2 890.1 L2191.4 903.8 L2196.1 917.6 L2200.4 931.5 L2204.2 945.3 L2207.5 959.3 L2210.4 973.2 L2212.8 987.3 L2214.8 1001.3 L2216.3 1015.4 L2217.4 1029.6 L2218.0 1043.8" fill="none" stroke="#082a60" stroke-width="1.2"/><path d="M2115.0 800.0 L2119.2 815.1 L2123.1 830.3 L2126.6 845.6 L2129.9 861.1 L2132.8 876.7 L2135.3 892.4 L2137.6 908.3 L2139.5 924.2 L2141.1 940.4 L2142.3 956.6 L2143.3 973.0 L2143.9 989.6 L2144.1 1006.2 L2144.1 1023.0 L2143.7 1039.9 L2143.0 1057.0 L2134.0 1056.5 L2135.0 1039.7 L2135.7 1022.9 L2136.1 1006.3 L2136.1 989.8 L2135.8 973.4 L2135.2 957.1 L2134.3 941.0 L2133.0 925.0 L2131.5 909.1 L2129.5 893.3 L2127.3 877.6 L2124.7 862.1 L2121.8 846.7 L2118.6 831.4 L2115.0 816.2 L2111.2 801.1 Z" fill="#2161b6" stroke="#0b3272" stroke-width="1"/><path d="M2111.2 801.1 L2115.0 816.2 L2118.6 831.4 L2121.8 846.7 L2124.7 862.1 L2127.3 877.6 L2129.5 893.3 L2131.5 909.1 L2133.0 925.0 L2134.3 941.0 L2135.2 957.1 L2135.8 973.4 L2136.1 989.8 L2136.1 1006.3 L2135.7 1022.9 L2135.0 1039.7 L2134.0 1056.5" fill="none" stroke="#3f86d8" stroke-width="1.2" opacity="0.7"/><path d="M2115.0 800.0 L2119.2 815.1 L2123.1 830.3 L2126.6 845.6 L2129.9 861.1 L2132.8 876.7 L2135.3 892.4 L2137.6 908.3 L2139.5 924.2 L2141.1 940.4 L2142.3 956.6 L2143.3 973.0 L2143.9 989.6 L2144.1 1006.2 L2144.1 1023.0 L2143.7 1039.9 L2143.0 1057.0" fill="none" stroke="#082a60" stroke-width="1.2"/><path d="M2113.0 862.0 L2112.5 874.2 L2111.8 886.2 L2110.9 898.1 L2109.8 909.9 L2108.5 921.5 L2107.0 933.0 L2105.3 944.4 L2103.4 955.6 L2101.2 966.7 L2098.9 977.6 L2096.3 988.4 L2093.6 999.1 L2090.6 1009.6 L2087.5 1020.0 L2084.1 1030.3 L2080.5 1040.4 L2073.0 1037.6 L2076.8 1027.8 L2080.4 1017.8 L2083.9 1007.6 L2087.1 997.3 L2090.1 986.9 L2092.9 976.3 L2095.5 965.5 L2098.0 954.6 L2100.2 943.6 L2102.2 932.3 L2104.0 921.0 L2105.6 909.5 L2107.0 897.8 L2108.2 886.0 L2109.2 874.0 L2110.0 861.9 Z" fill="#2161b6" stroke="#0b3272" stroke-width="1"/><path d="M2110.0 861.9 L2109.2 874.0 L2108.2 886.0 L2107.0 897.8 L2105.6 909.5 L2104.0 921.0 L2102.2 932.3 L2100.2 943.6 L2098.0 954.6 L2095.5 965.5 L2092.9 976.3 L2090.1 986.9 L2087.1 997.3 L2083.9 1007.6 L2080.4 1017.8 L2076.8 1027.8 L2073.0 1037.6" fill="none" stroke="#3f86d8" stroke-width="1.2" opacity="0.7"/><path d="M2113.0 862.0 L2112.5 874.2 L2111.8 886.2 L2110.9 898.1 L2109.8 909.9 L2108.5 921.5 L2107.0 933.0 L2105.3 944.4 L2103.4 955.6 L2101.2 966.7 L2098.9 977.6 L2096.3 988.4 L2093.6 999.1 L2090.6 1009.6 L2087.5 1020.0 L2084.1 1030.3 L2080.5 1040.4" fill="none" stroke="#082a60" stroke-width="1.2"/><path d="M2090.0 870.0 L2088.6 881.0 L2086.9 891.7 L2084.8 901.9 L2082.4 911.7 L2079.7 921.1 L2076.7 930.1 L2073.4 938.7 L2069.7 946.8 L2065.7 954.6 L2061.4 961.9 L2056.8 968.8 L2051.9 975.4 L2046.6 981.5 L2041.0 987.2 L2035.1 992.4 L2028.9 997.3 L2033.6 1003.8 L2040.1 998.3 L2046.1 992.5 L2051.8 986.2 L2057.1 979.6 L2062.1 972.6 L2066.6 965.2 L2070.8 957.4 L2074.7 949.2 L2078.2 940.7 L2081.3 931.7 L2084.1 922.5 L2086.5 912.8 L2088.6 902.7 L2090.4 892.3 L2091.9 881.5 L2093.0 870.3 Z" fill="#2161b6" stroke="#0b3272" stroke-width="1"/><path d="M2093.0 870.3 L2091.9 881.5 L2090.4 892.3 L2088.6 902.7 L2086.5 912.8 L2084.1 922.5 L2081.3 931.7 L2078.2 940.7 L2074.7 949.2 L2070.8 957.4 L2066.6 965.2 L2062.1 972.6 L2057.1 979.6 L2051.8 986.2 L2046.1 992.5 L2040.1 998.3 L2033.6 1003.8" fill="none" stroke="#3f86d8" stroke-width="1.2" opacity="0.7"/><path d="M2090.0 870.0 L2088.6 881.0 L2086.9 891.7 L2084.8 901.9 L2082.4 911.7 L2079.7 921.1 L2076.7 930.1 L2073.4 938.7 L2069.7 946.8 L2065.7 954.6 L2061.4 961.9 L2056.8 968.8 L2051.9 975.4 L2046.6 981.5 L2041.0 987.2 L2035.1 992.4 L2028.9 997.3" fill="none" stroke="#082a60" stroke-width="1.2"/><path d="M2085.0 905.0 L2081.7 909.2 L2078.1 913.1 L2074.1 916.7 L2069.8 920.0 L2065.1 923.0 L2060.1 925.6 L2054.7 928.0 L2049.0 930.0 L2043.0 931.7 L2036.6 933.1 L2029.8 934.2 L2022.8 935.0 L2015.3 935.5 L2007.6 935.6 L1999.5 935.5 L1991.0 935.0 L1990.6 941.0 L1999.2 941.2 L2007.6 941.1 L2015.5 940.7 L2023.2 940.0 L2030.5 938.9 L2037.4 937.5 L2044.0 935.8 L2050.2 933.8 L2056.1 931.5 L2061.6 928.8 L2066.7 925.8 L2071.5 922.5 L2075.8 918.8 L2079.8 914.9 L2083.4 910.7 L2086.6 906.2 Z" fill="#2161b6" stroke="#0b3272" stroke-width="1"/><path d="M2086.6 906.2 L2083.4 910.7 L2079.8 914.9 L2075.8 918.8 L2071.5 922.5 L2066.7 925.8 L2061.6 928.8 L2056.1 931.5 L2050.2 933.8 L2044.0 935.8 L2037.4 937.5 L2030.5 938.9 L2023.2 940.0 L2015.5 940.7 L2007.6 941.1 L1999.2 941.2 L1990.6 941.0" fill="none" stroke="#3f86d8" stroke-width="1.2" opacity="0.7"/><path d="M2085.0 905.0 L2081.7 909.2 L2078.1 913.1 L2074.1 916.7 L2069.8 920.0 L2065.1 923.0 L2060.1 925.6 L2054.7 928.0 L2049.0 930.0 L2043.0 931.7 L2036.6 933.1 L2029.8 934.2 L2022.8 935.0 L2015.3 935.5 L2007.6 935.6 L1999.5 935.5 L1991.0 935.0" fill="none" stroke="#082a60" stroke-width="1.2"/><path d="M2027.0 707.0 L2029.3 698.7 L2031.5 690.6 L2033.9 682.6 L2036.2 674.8 L2038.5 667.1 L2040.9 659.6 L2043.3 652.2 L2045.8 645.0 L2048.2 638.0 L2050.7 631.1 L2053.2 624.3 L2055.7 617.8 L2058.2 611.3 L2060.8 605.1 L2063.4 599.0 L2066.0 593.0 L2055.0 588.1 L2052.9 594.4 L2050.9 600.9 L2048.8 607.5 L2046.8 614.3 L2044.9 621.2 L2042.9 628.2 L2041.0 635.4 L2039.1 642.7 L2037.3 650.2 L2035.4 657.8 L2033.7 665.6 L2031.9 673.4 L2030.1 681.5 L2028.4 689.7 L2026.7 698.0 L2025.1 706.5 Z" fill="#2161b6" stroke="#0b3272" stroke-width="1"/><path d="M2025.1 706.5 L2026.7 698.0 L2028.4 689.7 L2030.1 681.5 L2031.9 673.4 L2033.7 665.6 L2035.4 657.8 L2037.3 650.2 L2039.1 642.7 L2041.0 635.4 L2042.9 628.2 L2044.9 621.2 L2046.8 614.3 L2048.8 607.5 L2050.9 600.9 L2052.9 594.4 L2055.0 588.1" fill="none" stroke="#3f86d8" stroke-width="1.2" opacity="0.7"/><path d="M2027.0 707.0 L2029.3 698.7 L2031.5 690.6 L2033.9 682.6 L2036.2 674.8 L2038.5 667.1 L2040.9 659.6 L2043.3 652.2 L2045.8 645.0 L2048.2 638.0 L2050.7 631.1 L2053.2 624.3 L2055.7 617.8 L2058.2 611.3 L2060.8 605.1 L2063.4 599.0 L2066.0 593.0" fill="none" stroke="#082a60" stroke-width="1.2"/><path d="M2012.5 713.0 L2012.5 707.7 L2012.5 702.5 L2012.6 697.5 L2012.8 692.6 L2013.0 687.8 L2013.3 683.1 L2013.7 678.6 L2014.1 674.2 L2014.6 670.0 L2015.2 665.9 L2015.8 661.9 L2016.5 658.1 L2017.3 654.3 L2018.1 650.8 L2019.0 647.3 L2020.0 644.0 L2009.5 640.8 L2009.0 644.5 L2008.5 648.4 L2008.2 652.4 L2007.9 656.4 L2007.8 660.5 L2007.7 664.8 L2007.6 669.1 L2007.7 673.5 L2007.8 678.1 L2008.0 682.7 L2008.2 687.5 L2008.5 692.4 L2008.9 697.4 L2009.4 702.5 L2009.9 707.7 L2010.5 713.0 Z" fill="#2161b6" stroke="#0b3272" stroke-width="1"/><path d="M2010.5 713.0 L2009.9 707.7 L2009.4 702.5 L2008.9 697.4 L2008.5 692.4 L2008.2 687.5 L2008.0 682.7 L2007.8 678.1 L2007.7 673.5 L2007.6 669.1 L2007.7 664.8 L2007.8 660.5 L2007.9 656.4 L2008.2 652.4 L2008.5 648.4 L2009.0 644.5 L2009.5 640.8" fill="none" stroke="#3f86d8" stroke-width="1.2" opacity="0.7"/><path d="M2012.5 713.0 L2012.5 707.7 L2012.5 702.5 L2012.6 697.5 L2012.8 692.6 L2013.0 687.8 L2013.3 683.1 L2013.7 678.6 L2014.1 674.2 L2014.6 670.0 L2015.2 665.9 L2015.8 661.9 L2016.5 658.1 L2017.3 654.3 L2018.1 650.8 L2019.0 647.3 L2020.0 644.0" fill="none" stroke="#082a60" stroke-width="1.2"/><path d="M2002.0 748.7 L2000.5 745.8 L1999.1 742.9 L1997.8 740.1 L1996.5 737.3 L1995.3 734.6 L1994.1 732.0 L1993.0 729.4 L1992.0 726.9 L1991.0 724.5 L1990.1 722.1 L1989.3 719.8 L1988.5 717.5 L1987.8 715.3 L1987.1 713.1 L1986.5 711.0 L1986.0 709.0 L1976.3 711.4 L1977.4 713.5 L1978.5 715.7 L1979.7 717.8 L1980.9 720.0 L1982.2 722.2 L1983.6 724.5 L1985.0 726.8 L1986.4 729.2 L1988.0 731.6 L1989.5 734.0 L1991.2 736.5 L1992.9 739.0 L1994.6 741.6 L1996.4 744.2 L1998.3 746.9 L2000.2 749.6 Z" fill="#2161b6" stroke="#0b3272" stroke-width="1"/><path d="M2000.2 749.6 L1998.3 746.9 L1996.4 744.2 L1994.6 741.6 L1992.9 739.0 L1991.2 736.5 L1989.5 734.0 L1988.0 731.6 L1986.4 729.2 L1985.0 726.8 L1983.6 724.5 L1982.2 722.2 L1980.9 720.0 L1979.7 717.8 L1978.5 715.7 L1977.4 713.5 L1976.3 711.4" fill="none" stroke="#3f86d8" stroke-width="1.2" opacity="0.7"/><path d="M2002.0 748.7 L2000.5 745.8 L1999.1 742.9 L1997.8 740.1 L1996.5 737.3 L1995.3 734.6 L1994.1 732.0 L1993.0 729.4 L1992.0 726.9 L1991.0 724.5 L1990.1 722.1 L1989.3 719.8 L1988.5 717.5 L1987.8 715.3 L1987.1 713.1 L1986.5 711.0 L1986.0 709.0" fill="none" stroke="#082a60" stroke-width="1.2"/><path d="M1993 748 L2043 700 L2105 697 L2125 740 L2080 765 L2050 765 L2005 785 Z" fill="url(#collar)" stroke="#0b3272" stroke-width="0.8" opacity="0.85"/><path d="M2043 700 L2043 757" stroke="#0b3272" stroke-width="0.9" fill="none"/><ellipse cx="2044" cy="811" rx="39" ry="59" fill="#1b58ac" stroke="#0a2c66" stroke-width="1" stroke-dasharray="3,1.5"/><ellipse cx="2042" cy="811" rx="30" ry="56" fill="none" stroke="#0a2c66" stroke-width="0.8" stroke-dasharray="3,1.5"/><path d="M1956 810 C1985 786 2008 757 2042 755 A30 56 0 0 1 2042 867 C2008 865 1985 834 1956 810 Z" fill="url(#cone)" stroke="#0a2c66" stroke-width="0.9"/><path d="M1990 804 Q2015 792 2044 786" stroke="#a6dcff" stroke-width="4.5" fill="none" stroke-linecap="round" opacity="0.75"/><circle cx="1955" cy="810" r="4.5" fill="#2a6ac0" stroke="#0a2c66" stroke-width="0.8"/><path d="M1772 1079 V1047" stroke="#00d000" stroke-width="1.6"/><path d="M1772 1043 L1769.5 1049 H1774.5 Z" fill="#00d000"/><path d="M1772 1079 H1794" stroke="#1a1ac0" stroke-width="2"/><path d="M1798 1079 L1792 1076.5 V1081.5 Z" fill="#1a1ac0"/><path d="M1772 1079 H1753" stroke="#b00000" stroke-width="2"/><circle cx="1751.5" cy="1079" r="2" fill="#b00000"/><g font-family="Liberation Serif" font-size="19" fill="#fff"><text x="1774" y="1046">y</text><text x="1755" y="1083">x</text><text x="1797" y="1083">z</text></g></svg>
<div class="a" style="left:1696px;top:1147px;width:736px;height:3px;background:#fbfbfb"></div><div class="a" style="left:1696px;top:1150px;width:736px;height:23px;background:#f0f0f0"></div><div class="a" style="left:2346.3px;top:1152.2px;width:65.3px;height:21px;background:#e6e6e6;border:1px solid #bcbcbc;border-bottom:none;box-sizing:border-box"></div><svg class="a" style="left:2418px;top:1159px" width="12" height="12" viewBox="0 0 12 12" fill="#b4b4b4"><rect x="8" y="0" width="2" height="2"/><rect x="4" y="4" width="2" height="2"/><rect x="8" y="4" width="2" height="2"/><rect x="0" y="8" width="2" height="2"/><rect x="4" y="8" width="2" height="2"/><rect x="8" y="8" width="2" height="2"/></svg><div class="t" style="left:1699.3px;top:1155px;font-size:15.3px;color:#000">Mouse pointer:  out of range</div>


</body></html>
